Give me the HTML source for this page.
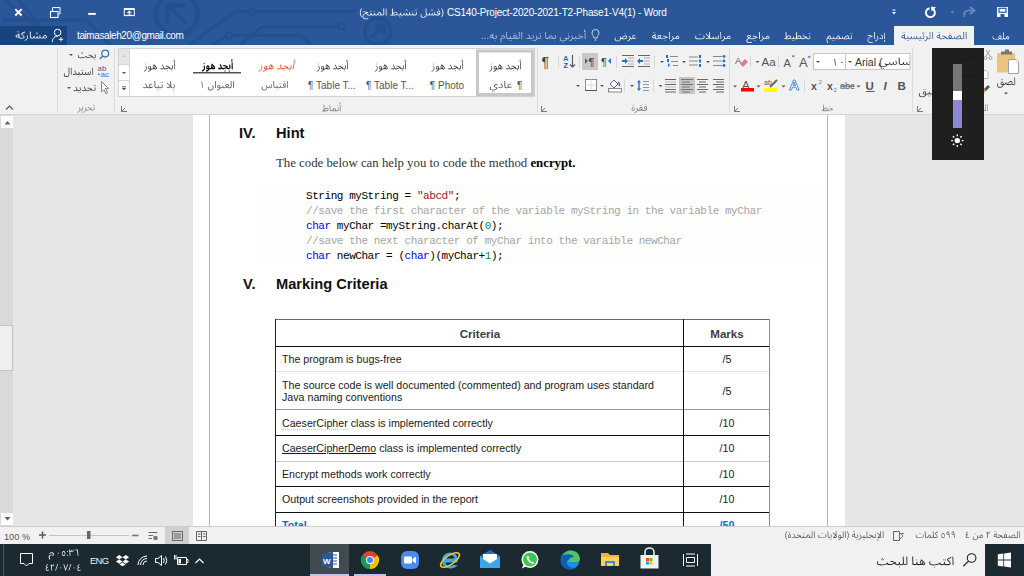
<!DOCTYPE html>
<html><head><meta charset="utf-8">
<style>
*{margin:0;padding:0;box-sizing:border-box}
html,body{width:1024px;height:576px;overflow:hidden;background:#e6e6e6;font-family:"Liberation Sans",sans-serif}
.a{position:absolute}
.t{position:absolute;white-space:pre;line-height:1}
#title{left:0;top:0;width:1024px;height:45px;background:#2b579a;overflow:hidden}
#ribbon{left:0;top:45px;width:1024px;height:70px;background:#f1f1f1;border-bottom:1px solid #d5d5d5}
#doc{left:0;top:115px;width:1024px;height:411px;background:#e6e6e6;overflow:hidden}
#status{left:0;top:526px;width:1024px;height:18px;background:#f1f1f1;border-top:1px solid #cdcdcd}
#task{left:0;top:544px;width:1024px;height:32px;background:#1a2a30}
.wt{color:#fff}
.ar{font-family:"Liberation Sans",sans-serif}
</style></head><body>

<!-- TITLE BAR -->
<div id="title" class="a">
  <svg class="a" style="left:0;top:0" width="460" height="45" fill="none" stroke="#23508f" stroke-width="3">
    <path d="M5 0 L36.3 26"/><path d="M18 0 L40.8 26"/>
    <path d="M2 20 L86 20 L110 45"/>
    <circle cx="176.7" cy="14.5" r="21" stroke-width="5"/>
    <path d="M186 23 L169 6" stroke-width="4.5"/><path d="M165 3 H186 V7.5 H169.5 V23.5 H165Z" fill="#23508f" stroke="none"/>
    <path d="M189 45 L235 11.5 L249 11.5 M255.5 11.5 L356 11.5"/><circle cx="252.3" cy="11.5" r="3.2" stroke-width="2"/>
    <path d="M240 45 L262.5 26.5 L338.3 26.5"/><circle cx="341.5" cy="26.5" r="3.2" stroke-width="2"/>
    <path d="M212 45 L226.3 36.5 M232.5 35.5 L301.6 35.5 L311 45"/><circle cx="229.3" cy="35.5" r="3.2" stroke-width="2"/>
    <circle cx="377.7" cy="31.5" r="13" stroke-width="4"/>
    <path d="M371 38 L382 27" stroke-width="4"/><path d="M375 23.5 H386 V34.5 H382 V27.5 H375Z" fill="#23508f" stroke="none"/>
  </svg>
  <!-- window controls -->
  <svg class="a" style="left:0;top:0" width="140" height="26" fill="none" stroke="#fff">
    <path d="M15.3 9.2 L21.6 15.5 M21.6 9.2 L15.3 15.5" stroke-width="1.9"/>
    <rect x="50.5" y="11.5" width="7.5" height="6" stroke-width="1.1"/>
    <path d="M52.5 11 V7.6 H60 V14 H58.5" stroke-width="1"/>
    <path d="M88.2 13.9 H95.8" stroke-width="1.9"/>
    <rect x="124.3" y="8.6" width="10" height="7" stroke-width="1"/>
    <path d="M124.3 9.2 H134.3" stroke-width="1.6"/>
    <path d="M129.3 15 V11.5" stroke-width="1"/><path d="M127.3 12.8 L129.3 10.8 L131.3 12.8Z" fill="#fff" stroke-width="0.6"/>
    <path d="M126.5 15.2 H132" stroke-width="0.8"/>
  </svg>
  <div class="t wt" style="left:447px;top:8px;font-size:10px;letter-spacing:-0.2px">CS140-Project-2020-2021-T2-Phase1-V4(1) - Word</div>
  <!-- QAT -->
  <svg class="a" style="left:880px;top:0" width="144" height="26">
    <path d="M12.5 10 H15.5" stroke="#fff" stroke-width="1"/>
    <path d="M12 12 H16 L14 14.5Z" fill="#fff"/>
    <path d="M52.6 8.7 A4.5 4.5 0 1 1 49.5 8.2" fill="none" stroke="#fff" stroke-width="1.9"/>
    <path d="M51 6.6 L56 7.2 L51.6 11.6Z" fill="#fff"/>
    <path d="M70.5 11.5 H74.5 L72.5 13.5Z" fill="#6f8fc0"/>
    <path d="M84.5 17 C83 13 85 10.5 89 10.5 H92" fill="none" stroke="#6f8fc0" stroke-width="1.6"/>
    <path d="M90 7 L94.5 10.5 L90 14" fill="none" stroke="#6f8fc0" stroke-width="1.6"/>
    <path d="M117 7 H128 V17 H117Z" fill="#fff"/>
    <rect x="119" y="8.3" width="7" height="4" fill="none" stroke="#2b579a" stroke-width="1.2"/>
    <rect x="120.5" y="14" width="4" height="3" fill="#2b579a"/>
  </svg>
  <!-- tabs row -->
  <div class="a" style="left:0;top:26px;width:67px;height:19px;background:#19437e"></div>
  <svg class="a" style="left:50px;top:27px" width="16" height="17" fill="none" stroke="#fff" stroke-width="1">
    <circle cx="7.6" cy="5.5" r="3.3"/><path d="M2.3 15 C2.5 11 5 9.2 7.8 9.2"/>
    <path d="M8.8 12.3 H13.2 M11 10.1 V14.5" stroke-width="0.9"/>
  </svg>
  <div class="t wt" style="left:77px;top:31.2px;font-size:10px;letter-spacing:-0.4px">taimasaleh20@gmail.com</div>
  <svg class="a" style="left:590px;top:28px" width="12" height="14" fill="none" stroke="#c8d4e8" stroke-width="1">
    <path d="M4 10 C4 8 2 7 2 5 A3.5 3.5 0 0 1 9 5 C9 7 7 8 7 10 Z M4.5 12 H6.5"/>
  </svg>
  <div class="a" style="left:894px;top:26px;width:80px;height:19px;background:#f1f1f1"></div>
</div>

<!-- RIBBON -->
<div id="ribbon" class="a">
</div>
<svg class="a" style="left:0;top:0" width="1024" height="120" font-family="Liberation Sans, sans-serif">
  <!-- group separators -->
  <g fill="#dcdcdc">
    <rect x="57" y="48" width="1" height="64"/><rect x="114" y="48" width="1" height="64"/>
    <rect x="537" y="48" width="1" height="64"/><rect x="729" y="48" width="1" height="64"/>
    <rect x="912" y="48" width="1" height="64"/>
  </g>
  <!-- collapse arrow -->
  <path d="M6 109.5 L9.5 106 L13 109.5" fill="none" stroke="#555" stroke-width="1.2"/>
  <!-- group labels -->
  <g font-size="10" fill="#666" text-anchor="end">
  </g>
  <!-- dialog launchers -->
  <g fill="none" stroke="#777" stroke-width="1">
    <path d="M121.5 106 V111.5 H127 M121.5 111.5 L125 108"/>
    <path d="M541.5 106 V111.5 H547 M541.5 111.5 L545 108"/>
    <path d="M734.5 106 V111.5 H740 M734.5 111.5 L738 108"/>
    <path d="M917.5 106 V111.5 H923 M917.5 111.5 L921 108"/>
  </g>
  <!-- editing group -->
  <g fill="none" stroke="#3a78c3" stroke-width="1.3"><circle cx="105.2" cy="53.6" r="3.4"/><path d="M102.8 56 L99.8 59"/></g>
  <g font-size="10.5" fill="#333" text-anchor="end">
  </g>
  <path d="M69 54 L73 54 L71 56Z M67 87 L71 87 L69 89Z" fill="#555"/>
  <text x="97.5" y="71" font-size="8" fill="#666">a</text><text x="102" y="71" font-size="8" fill="#7d3ab8">b</text>
  <text x="100.5" y="77" font-size="8" fill="#3a78c3">ac</text><rect x="98" y="73.5" width="1.6" height="1.6" fill="#3a78c3"/>
  <path d="M101.5 81.5 V92 L104 89.5 L106 94 L107.5 93 L105.5 88.5 H108.5 Z" fill="#fff" stroke="#777" stroke-width="0.9"/>
  <!-- styles gallery -->
  <rect x="118.5" y="48.5" width="416" height="48" fill="#fff" stroke="#d2d2d2"/>
  <rect x="119" y="49" width="10" height="15" fill="#e6e6e6"/>
  <path d="M129.5 49 V96" stroke="#d8d8d8"/>
  <path d="M119 64.5 H129 M119 80.5 H129" stroke="#d8d8d8"/>
  <path d="M122.5 57 L124 55.5 L125.5 57" fill="none" stroke="#bbb"/>
  <path d="M122 72 H126 L124 74Z" fill="#555"/>
  <path d="M122 86.5 H126 M122 88 H126 L124 90Z" fill="#555" stroke="#555" stroke-width="0.6"/>
  <rect x="477.5" y="51" width="55" height="43.5" fill="#fff" stroke="#c8c8c8" stroke-width="3"/>
  <g font-size="10.5" text-anchor="middle" fill="#333">
  </g>
  <rect x="193" y="72" width="48" height="1.5" fill="#555"/>
  <g font-size="10" text-anchor="middle" fill="#555">
    <text x="517" y="89" text-anchor="start">¶</text>
  </g>
  <g font-size="10" text-anchor="middle" fill="#555">
    <text x="447" y="89">¶ Photo</text>
    <text x="390" y="89">¶ Table T...</text>
    <text x="332" y="89">¶ Table T...</text>
  </g>
  <!-- paragraph group row1 -->
  <text x="541.5" y="67" font-size="14" fill="#444">¶</text>
  <rect x="558" y="56" width="1" height="12" fill="#d8d8d8"/>
  <text x="563" y="61" font-size="7.5" font-weight="bold" fill="#2b6fc1">A</text>
  <text x="563.5" y="68" font-size="7.5" font-weight="bold" fill="#7030a0">Z</text>
  <path d="M572.5 55 V67 M570 64.5 L572.5 67 L575 64.5" fill="none" stroke="#555" stroke-width="1.1"/>
  <rect x="579" y="56" width="1" height="12" fill="#d8d8d8"/>
  <rect x="582" y="53" width="16" height="17" fill="#c8c8c8"/>
  <path d="M585 58 L588 61 L585 64Z" fill="#2b6fc1"/>
  <text x="588.5" y="66" font-size="11" fill="#444">¶</text>
  <text x="601" y="66" font-size="11" fill="#444">¶</text>
  <path d="M611 58 L608 61 L611 64Z" fill="#2b6fc1"/>
  <rect x="616" y="56" width="1" height="12" fill="#d8d8d8"/>
  <g stroke="#666" stroke-width="1">
    <path d="M622 55.5 H634 M622 66.5 H634"/>
    <path d="M628 58 H634 M628 61 H634 M628 64 H634" stroke="#aaa"/>
    <path d="M638 55.5 H650 M638 66.5 H650"/>
    <path d="M644 58 H650 M644 61 H650 M644 64 H650" stroke="#aaa"/>
  </g>
  <path d="M622 60 H625 V58 L628 61 L625 64 V62 H622Z" fill="#2b6fc1"/>
  <path d="M643 60 H640 V58 L637 61 L640 64 V62 H643Z" fill="#2b6fc1"/>
  <rect x="654" y="56" width="1" height="12" fill="#d8d8d8"/>
  <g fill="#555">
    <path d="M660 61 H664 L662 63Z"/><path d="M682 61 H686 L684 63Z"/><path d="M706 61 H710 L708 63Z"/>
  </g>
  <g stroke="#888" stroke-width="1">
    <path d="M670 56.5 H678 M671 61.5 H678 M673 65.5 H678"/>
    <path d="M689 57 H698 M689 61 H698 M689 65 H698"/>
    <path d="M713 56.5 H722 M713 61 H722 M713 65.5 H722"/>
  </g>
  <g fill="#2b6fc1">
    <rect x="666" y="55" width="2" height="3"/><rect x="667" y="59" width="2" height="3"/><rect x="668" y="63.5" width="1.5" height="3"/>
    <rect x="699" y="55" width="2" height="3"/><rect x="699" y="59.5" width="2" height="3"/><rect x="699" y="64" width="2" height="3"/>
    <circle cx="724" cy="56.5" r="1.4"/><circle cx="724" cy="61" r="1.4"/><circle cx="724" cy="65.5" r="1.4"/>
  </g>
  <!-- paragraph row2 -->
  <g fill="#555">
    <path d="M576 85 H580 L578 87Z"/><path d="M600 85 H604 L602 87Z"/><path d="M630 85 H634 L632 87Z"/><path d="M658.5 85 H662.5 L660.5 87Z"/>
  </g>
  <rect x="585.5" y="79.5" width="11" height="11" fill="#fff" stroke="#888"/>
  <path d="M591 79.5 V90.5 M585.5 85 H596.5" stroke="#ddd"/>
  <path d="M585.5 90.5 H596.5" stroke="#555"/>
  <rect x="608.5" y="88.5" width="13" height="3.5" fill="#fff" stroke="#888"/>
  <path d="M610 84 L614 80 L618 84 L614 88Z" fill="#fff" stroke="#666"/>
  <path d="M618 82 Q620.5 84 619 86" fill="none" stroke="#2b6fc1" stroke-width="1.3"/>
  <rect x="624" y="79" width="1" height="13" fill="#d8d8d8"/>
  <path d="M639 80 L641 82.5 H637Z M639 91 L641 88.5 H637Z" fill="#2b6fc1"/>
  <path d="M639 82 V89" stroke="#2b6fc1" stroke-width="1.4"/>
  <path d="M643 81.5 H649 M643 84.5 H649 M643 87.5 H649 M643 90.5 H649" stroke="#999"/>
  <rect x="653" y="79" width="1" height="13" fill="#d8d8d8"/>
  <rect x="679" y="77" width="16" height="17" fill="#c6c6c6"/>
  <g stroke="#666" stroke-width="1">
    <path d="M665 79.5 H676 M665 84.5 H676 M665 89.5 H676 M665 92 H676"/>
    <path d="M665 82 H676 M665 87 H676" stroke="#bbb"/>
    <path d="M681 79.5 H693 M682 82 H690 M681 84.5 H693 M682 87 H690 M681 89.5 H693 M682 92 H690" stroke="#777"/>
    <path d="M697 79.5 H708 M699 82 H706 M697 84.5 H708 M699 87 H706 M697 89.5 H708 M699 92 H706"/>
    <path d="M713 79.5 H724 M716 82 H724 M713 84.5 H724 M716 87 H724 M713 89.5 H724 M716 92 H724"/>
  </g>
  <!-- font group row1 -->
  <text x="735" y="63.5" font-size="9.5" fill="#555">A</text>
  <path d="M740 64 L745 59 L748 62 L743 67Z" fill="#e27b8d"/>
  <rect x="750" y="56" width="1" height="12" fill="#d8d8d8"/>
  <path d="M755.5 61 H759.5 L757.5 63Z" fill="#555"/>
  <text x="761.5" y="66" font-size="11.5" fill="#555">Aa</text>
  <rect x="778" y="56" width="1" height="12" fill="#d8d8d8"/>
  <text x="783.5" y="67" font-size="11" fill="#555">A</text>
  <path d="M791.5 55.5 H795 L793.2 57.5Z" fill="#2b6fc1"/>
  <text x="799" y="67" font-size="13" fill="#555">A</text>
  <path d="M807.5 57.5 H811 L809.2 55.5Z" fill="#2b6fc1"/>
  <rect x="813.5" y="53.5" width="96.5" height="16" fill="#fff" stroke="#c6c6c6"/>
  <path d="M845.5 54 V69" stroke="#c6c6c6"/>
  <path d="M816 61 H820 L818 63Z M848 61 H852 L850 63Z" fill="#555"/>
  <text x="855" y="66" font-size="10.5" fill="#333">Arial (</text>
  <rect x="904" y="54" width="5" height="15" fill="#fff"/>
  <!-- font row2 -->
  <g fill="#555"><path d="M733 85.5 H737 L735 87.5Z"/><path d="M756.5 85.5 H760.5 L758.5 87.5Z"/><path d="M781.5 85.5 H785.5 L783.5 87.5Z"/><path d="M856.5 85.5 H860.5 L858.5 87.5Z"/></g>
  <text x="742" y="88.5" font-size="11.5" fill="#555">A</text>
  <rect x="741" y="88" width="13" height="3.5" fill="#f00"/>
  <text x="764" y="85" font-size="7" fill="#555">ab</text>
  <path d="M770 87 L777 80" stroke="#666" stroke-width="2"/>
  <rect x="764" y="88" width="13" height="4" fill="#ff0"/>
  <path d="M789.5 90 L793.5 80 L795 80 L799 90 H797 L796 87.2 H792.5 L791.5 90Z M793 85.5 H795.5 L794.2 82Z" fill="#fff" stroke="#3d7fd0" stroke-width="0.9" stroke-linejoin="round"/>
  <rect x="804" y="79" width="1" height="13" fill="#d8d8d8"/>
  <text x="811" y="90" font-size="10.5" font-weight="bold" fill="#555">x</text>
  <text x="818.5" y="84" font-size="6" fill="#4a8ad4">2</text>
  <text x="827" y="90" font-size="10.5" font-weight="bold" fill="#555">x</text>
  <text x="833.5" y="92" font-size="6" fill="#4a8ad4">2</text>
  <text x="840" y="89" font-size="9" fill="#555">abe</text>
  <path d="M840 86 H854" stroke="#555" stroke-width="0.8"/>
  <text x="865.5" y="89.5" font-size="11.5" font-weight="bold" fill="#555">U</text>
  <path d="M866 91.5 H874.5" stroke="#555"/>
  <text x="883.5" y="89.5" font-size="11.5" font-weight="bold" font-style="italic" fill="#555">I</text>
  <text x="897.5" y="89.5" font-size="11.5" font-weight="bold" fill="#555">B</text>
  <!-- clipboard group -->
  <g font-size="10" fill="#444" text-anchor="end">
  </g>
  <rect x="997" y="53" width="18" height="19.5" rx="1" fill="#eac47c"/>
  <rect x="1001" y="51.5" width="11" height="3" fill="#777"/>
  <rect x="1005" y="49.5" width="4" height="2.5" fill="#777"/>
  <path d="M1008.5 59.5 H1016 L1018.5 62 V73.5 H1008.5 Z" fill="#fff" stroke="#999" stroke-width="0.9"/>
  <g fill="none" stroke="#999" stroke-width="0.9"><path d="M986 50 L990 56 M990 50 L986 56"/><circle cx="985.5" cy="58" r="1.5"/><circle cx="990.5" cy="58" r="1.5"/></g>
  <path d="M981.5 70.5 H986 L988 72.5 V78.5 H981.5Z" fill="#fff" stroke="#d9a0b0" stroke-width="0.9"/>
  <path d="M980 93 L984 89 L986 91 L982 95Z" fill="#e0a040"/><path d="M984 89 L988 85 L990 87 L986 91Z" fill="#555"/>
  <path d="M1004 92.5 H1008 L1006 94.5Z" fill="#555"/>
</svg>


<!-- DOCUMENT -->
<div id="doc" class="a">
  <!-- scrollbar -->
  <div class="a" style="left:0;top:0;width:13px;height:412px;background:#dadada"></div>
  <div class="a" style="left:1px;top:1px;width:12px;height:12px;background:#fff"></div>
  <svg class="a" style="left:1px;top:1px" width="12" height="12"><path d="M3.5 8.5 L6.5 5 L9.5 8.5Z" fill="#606060"/></svg>
  <div class="a" style="left:0;top:210px;width:13px;height:46px;background:#efefef;border:1px solid #c4c4c4;border-left:none"></div>
  <div class="a" style="left:1px;top:398px;width:12px;height:12px;background:#fff"></div>
  <svg class="a" style="left:1px;top:398px" width="12" height="12"><path d="M3.5 4 L6.5 7.5 L9.5 4Z" fill="#606060"/></svg>
  <!-- page -->
  <div class="a" style="left:193px;top:0;width:652px;height:412px;background:#fff"></div>
  <div class="a" style="left:256px;top:70px;width:571px;height:77px;background:#fefefc"></div>
  <div class="a" style="left:209px;top:0;width:1px;height:412px;background:#b4b4b4"></div>
  <div class="a" style="left:827px;top:0;width:1px;height:412px;background:#b4b4b4"></div>
  <!-- headings -->
  <div class="t" style="left:239px;top:11px;font-size:14.67px;font-weight:bold;color:#111">IV.</div>
  <div class="t" style="left:276px;top:11px;font-size:14.67px;font-weight:bold;color:#111">Hint</div>
  <div class="t" style="left:276px;top:42px;font-family:'Liberation Serif',serif;font-size:12.8px;color:#333">The code below can help you to code the method <b style="color:#000">encrypt.</b></div>
  <div style="position:absolute;left:306px;top:73.5px;font-family:'Liberation Mono',monospace;font-size:11px;letter-spacing:-0.44px;line-height:15.2px;white-space:pre;color:#000">String myString = <span style="color:#a31515">"abcd"</span>;
<span style="color:#a6a6a6">//save the first character of the variable myString in the variable myChar</span>
<span style="color:#0000ff">char</span> myChar =myString.charAt(<span style="color:#098658">0</span>);
<span style="color:#a6a6a6">//save the next character of myChar into the varaible newChar</span>
<span style="color:#0000ff">char</span> newChar = (<span style="color:#0000ff">char</span>)(myChar+<span style="color:#098658">1</span>);</div>
  <div class="t" style="left:243px;top:162px;font-size:14.67px;font-weight:bold;color:#111">V.</div>
  <div class="t" style="left:276px;top:162px;font-size:14.67px;font-weight:bold;color:#111">Marking Criteria</div>
  <!-- table -->
  <div class="a" style="left:275px;top:204px;width:495px;height:1px;background:#6a6a6a"></div>
  <div class="a" style="left:275px;top:231px;width:495px;height:1px;background:#111"></div>
  <div class="a" style="left:275px;top:256px;width:495px;height:1px;background:#e6e6e6"></div>
  <div class="a" style="left:275px;top:294px;width:495px;height:1px;background:#9a9a9a"></div>
  <div class="a" style="left:275px;top:320px;width:495px;height:1px;background:#111"></div>
  <div class="a" style="left:275px;top:346px;width:495px;height:1px;background:#c8c8c8"></div>
  <div class="a" style="left:275px;top:371px;width:495px;height:1px;background:#111"></div>
  <div class="a" style="left:275px;top:397px;width:495px;height:1px;background:#111"></div>
  <div class="a" style="left:275px;top:204px;width:1px;height:208px;background:#222"></div>
  <div class="a" style="left:769px;top:204px;width:1px;height:208px;background:#8a8a8a"></div>
  <div class="a" style="left:683px;top:204px;width:1px;height:208px;background:#111"></div>
  <div class="t" style="left:276px;width:408px;text-align:center;top:212.5px;font-size:11.6px;font-weight:bold;color:#404040">Criteria</div>
  <div class="t" style="left:684px;width:86px;text-align:center;top:212.5px;font-size:11.6px;font-weight:bold;color:#404040">Marks</div>
  <div class="t" style="left:282px;top:239px;font-size:10.67px;color:#1a1a1a">The program is bugs-free</div>
  <div class="t" style="left:282px;top:264px;font-size:10.67px;color:#1a1a1a;line-height:12px">The source code is well documented (commented) and program uses standard
Java naming conventions</div>
  <div class="t" style="left:282px;top:303px;font-size:10.67px;color:#1a1a1a"><span style="border-bottom:1px dotted #ccc">CaeserCipher</span> class is implemented correctly</div>
  <div class="t" style="left:282px;top:328px;font-size:10.67px;color:#1a1a1a"><span style="text-decoration:underline">CaeserCipherDemo</span> class is implemented correctly</div>
  <div class="t" style="left:282px;top:354px;font-size:10.67px;color:#1a1a1a">Encrypt methods work correctly</div>
  <div class="t" style="left:282px;top:379px;font-size:10.67px;color:#1a1a1a">Output screenshots provided in the report</div>
  <div class="t" style="left:282px;top:405px;font-size:10.67px;font-weight:bold;color:#0070c0">Total</div>
  <div class="t" style="left:684px;width:86px;text-align:center;top:239px;font-size:10.67px;color:#1a1a1a">/5</div>
  <div class="t" style="left:684px;width:86px;text-align:center;top:271px;font-size:10.67px;color:#1a1a1a">/5</div>
  <div class="t" style="left:684px;width:86px;text-align:center;top:303px;font-size:10.67px;color:#1a1a1a">/10</div>
  <div class="t" style="left:684px;width:86px;text-align:center;top:328px;font-size:10.67px;color:#1a1a1a">/10</div>
  <div class="t" style="left:684px;width:86px;text-align:center;top:354px;font-size:10.67px;color:#1a1a1a">/10</div>
  <div class="t" style="left:684px;width:86px;text-align:center;top:379px;font-size:10.67px;color:#1a1a1a">/10</div>
  <div class="t" style="left:684px;width:86px;text-align:center;top:405px;font-size:10.67px;font-weight:bold;color:#0070c0">/50</div>
</div>

<!-- STATUS -->
<div id="status" class="a">
</div>
<svg class="a" style="left:0;top:526px" width="1024" height="50" font-family="Liberation Sans, sans-serif">
  <text x="4" y="13.5" font-size="9.2" fill="#555">100 %</text>
  <path d="M39 9 H46 M42.5 5.5 V12.5" stroke="#555" stroke-width="1.4"/>
  <path d="M49 9.5 H129" stroke="#c4c4c4"/>
  <rect x="87" y="5" width="3.5" height="8" fill="#666"/>
  <path d="M132 9.5 H138.5" stroke="#777" stroke-width="1.6"/>
  <g fill="none" stroke="#666" stroke-width="1">
    <path d="M148.5 6.5 H157.5 M148.5 9.5 H153 M148.5 12.5 H152"/>
    <circle cx="155.5" cy="12" r="2.3" fill="#777" stroke="none"/>
  </g>
  <rect x="165" y="1" width="24" height="17" fill="#d0d0d0"/>
  <g stroke="#666" stroke-width="1" fill="none">
    <rect x="172.5" y="5.5" width="10" height="9"/>
    <path d="M174 8 H181 M174 10 H181 M174 12 H181"/>
    <path d="M196.5 5.5 H206.5 V14.5 H196.5Z M201.5 5.5 V14.5 M198 8 H200.5 M198 10.5 H200.5 M203 8 H205.5 M203 10.5 H205.5"/>
  </g>
  <g font-size="9.5" fill="#555" text-anchor="end">
  </g>
  <g stroke="#666" fill="none" stroke-width="1"><path d="M893.5 5.5 H899.5 V14.5 H893.5Z"/><path d="M900 7 L903 10 L900 13 M901 7.5 H904" stroke-width="0.9"/></g>
</svg>

<!-- TASKBAR -->
<div id="task" class="a">
</div>
<svg class="a" style="left:0;top:544px" width="1024" height="32" font-family="Liberation Sans, sans-serif">
  <rect x="3" y="0" width="1" height="32" fill="#4a5458"/>
  <path d="M20.5 9.5 H32.5 V19.5 H29 L26.5 22 L24 19.5 H20.5Z" fill="none" stroke="#fff" stroke-width="1"/>
  <text x="90" y="20" font-size="9.5" fill="#f0f0f0" letter-spacing="-0.75">ENG</text>
  <g fill="#fff">
    <path d="M119.2 11 L122.5 13.2 L119.2 15.4 L115.9 13.2Z M125.8 11 L129.1 13.2 L125.8 15.4 L122.5 13.2Z M119.2 15.4 L122.5 17.6 L119.2 19.8 L115.9 17.6Z M125.8 15.4 L129.1 17.6 L125.8 19.8 L122.5 17.6Z M122.5 18.6 L125.6 20.6 L122.5 22.3 L119.4 20.6Z"/>
  </g>
  <g fill="none" stroke="#fff" stroke-width="1">
    <path d="M138 21 A9 9 0 0 1 147 12 M140.5 21 A6.5 6.5 0 0 1 147 14.5 M143 21 A4 4 0 0 1 147 17" />
    <path d="M155.5 14.5 H158 L161.5 11.5 V21.5 L158 18.5 H155.5Z M163.5 14 Q165 16.5 163.5 19 M165.5 12.5 Q168 16.5 165.5 20.5"/>
    <path d="M177.5 13.5 H186.5 V20.5 H177.5Z M186.5 15.5 H188 V18.5 H186.5"/>
    <path d="M174.5 11 V15.5 M176 11 V15.5"/>
    <path d="M195.5 19 L199.5 15 L203.5 19" stroke-width="1.2"/>
  </g>
  <rect x="178.5" y="15" width="2.5" height="4.5" fill="#fff"/>
  <!-- word active -->
  <rect x="310" y="0" width="39" height="32" fill="#3f4b4f"/>
  <rect x="310" y="30" width="39" height="2" fill="#c8bff5"/>
  <rect x="354" y="30" width="32" height="2" fill="#c8bff5"/>
  <rect x="329" y="8" width="10" height="16" fill="#fff"/>
  <path d="M331 11 H337 M331 14 H337 M331 17 H337 M331 20 H337" stroke="#2b579a" stroke-width="1"/>
  <path d="M322 10 L333 7.5 V24.5 L322 22Z" fill="#2b579a"/>
  <text x="323" y="20" font-size="8" font-weight="bold" fill="#fff">W</text>
  <!-- chrome -->
  <circle cx="370" cy="16" r="9" fill="#db4437"/>
  <path d="M370 16 L377.8 11.5 A9 9 0 0 1 370 25 Z" fill="#f4c20d"/>
  <path d="M370 16 L370 25 A9 9 0 0 1 362.2 11.5 Z" fill="#0f9d58"/>
  <circle cx="370" cy="16" r="4" fill="#fff"/><circle cx="370" cy="16" r="3" fill="#4285f4"/>
  <!-- zoom -->
  <rect x="401" y="7" width="18" height="18" rx="6" fill="#4a8cf0"/>
  <rect x="404" y="12.5" width="8" height="7" rx="1.2" fill="#fff"/>
  <path d="M412.5 15 L416 12.5 V19.5 L412.5 17Z" fill="#fff"/>
  <!-- IE -->
  <path d="M443 16.5 H457.5 Q458 9 450.5 8.5 Q443 8.5 442 16 Q441.5 24 450 24.5 Q455 24.5 457.5 21 H453 Q451.5 22 450 22 Q446 22 445.5 18.5 H457.5 V16.5 Z M445.5 14.5 Q446.5 11 450.3 11 Q454 11 454.5 14.5Z" fill="#3ba9ec" fill-rule="evenodd"/>
  <ellipse cx="450" cy="16" rx="11" ry="4.5" transform="rotate(-35 450 16)" fill="none" stroke="#f2c230" stroke-width="1.6"/>
  <path d="M443 16.5 H457.5 Q458 9 450.5 8.5 Q443 8.5 442 16" fill="none" stroke="#3ba9ec" stroke-width="0"/>
  <!-- mail -->
  <path d="M480 12 L490 6 L500 12 V24 H480Z" fill="#1b74c4"/>
  <path d="M480 12 L490 19 L500 12 V24 H480Z" fill="#3ba5ee"/>
  <path d="M483 10 H497 V15 L490 19.5 L483 15Z" fill="#fff"/>
  <!-- whatsapp -->
  <circle cx="530" cy="15.5" r="8.5" fill="#fff"/>
  <circle cx="530" cy="15.5" r="7" fill="#3ec552"/>
  <path d="M522 24.5 L523.5 20 L526 22.5Z" fill="#fff"/>
  <path d="M527 11.5 Q526 15 529 18 Q532 20.5 534 19.5 L533 17.5 L531.5 18 Q529 16.5 528.5 14 L529.5 13 Z" fill="#fff"/>
  <!-- edge -->
  <circle cx="570" cy="16" r="9.5" fill="#1d8fd6"/>
  <path d="M561 15 Q563 6 571 6.5 Q579.5 7 580 16 L570 16 Q566 16 566.5 19 Q568 24 575 24 Q569 27 564 23.5 Q560.5 20 561 15Z" fill="#0c5fb3"/>
  <path d="M571 6.5 Q579.5 7 580 15 Q580 18 575 18 H568 Q569 13 574 13 Q572 9 563 11 Q566 6.5 571 6.5Z" fill="#52c36b"/>
  <!-- explorer -->
  <path d="M601 9 H608 L610 11 H619 V22 H601Z" fill="#f0b733"/>
  <rect x="601" y="13" width="18" height="9" fill="#fcd25c"/>
  <path d="M605 22 V17 H615 V22 H613 V19 H607 V22Z" fill="#3e8ad6"/>
  <!-- store -->
  <path d="M640.5 11 H658.5 V24.5 H640.5Z" fill="#f2f2f2"/>
  <path d="M645 11 V8 A4.5 4 0 0 1 654 8 V11" fill="none" stroke="#f2f2f2" stroke-width="1.5"/>
  <rect x="646" y="14" width="3" height="3" fill="#f25022"/><rect x="649.5" y="14" width="3" height="3" fill="#7fba00"/>
  <rect x="646" y="17.5" width="3" height="3" fill="#00a4ef"/><rect x="649.5" y="17.5" width="3" height="3" fill="#ffb900"/>
  <!-- task view -->
  <g fill="none" stroke="#fff" stroke-width="1">
    <path d="M683.5 10 V22 M697.5 10 V22 M686 10 H695 M686 22 H695 M686.5 13.5 H694.5 V18.5 H686.5Z"/>
  </g>
  <!-- search -->
  <rect x="711" y="0" width="274" height="32" fill="#f2f2f2"/>
  <circle cx="971.6" cy="14" r="4.3" fill="none" stroke="#222" stroke-width="1.1"/>
  <path d="M968.5 17.1 L963.3 22.2" stroke="#222" stroke-width="1.2"/>
  <!-- start -->
  <g fill="#fff"><path d="M997.8 10.2 L1003.3 9.5 V15.6 H997.8Z M1004.1 9.4 L1011 8.5 V15.6 H1004.1Z M997.8 16.4 H1003.3 V22.5 L997.8 21.8Z M1004.1 16.4 H1011 V23.5 L1004.1 22.6Z"/></g>
</svg>

<svg class="a" style="left:0;top:0" width="1024" height="576">
<defs><clipPath id="cpa"><rect x="846" y="54" width="63.5" height="15"/></clipPath></defs>
<path transform="translate(359.37 15.50) scale(1.021 1)" d="M40.8 0.9 40.3 1.6 40.9 1.9 41.2 1.3ZM39.4 0.9 38.9 1.6 39.6 1.9 39.9 1.3ZM6.3 0.2 6 0.8 6.6 1.1 6.9 0.5ZM51.8 -4.8 51.7 -4.1 52.3 -3.9 52.5 -4.6ZM14.4 -4.8 14.3 -4.1 14.9 -3.9 15.1 -4.6ZM11.9 -4.8 11.6 -4.2 12.3 -3.9 12.6 -4.5ZM10.4 -4.8 10.3 -4.1 10.9 -3.9 11.1 -4.6ZM71.6 -5.3 71.4 -4.8 72.1 -4.4 72.3 -5ZM70.2 -5.2 70.1 -4.6 70.7 -4.4 70.9 -5.1ZM46.8 -5.3 46.6 -4.8 47.2 -4.4 47.5 -5ZM45.4 -5.2 45.2 -4.6 45.9 -4.4 46.1 -5.1ZM55.9 -6.1 55.6 -5.5 56.3 -5.2 56.6 -5.8ZM54.4 -6 54.3 -5.4 54.9 -5.2 55.1 -5.9ZM71 -6.4 70.7 -5.9 71.1 -5.5 71.4 -5.6 71.6 -6.1ZM46.2 -6.4 45.9 -5.9 46.2 -5.5 46.6 -5.6 46.8 -6.1ZM77.2 -6.9 77.1 -6.3 77.8 -6.1 77.9 -6.8ZM80.1 -7.1 81 -5.6 81.5 -3.6 81.3 -0.9 80.1 1.5 80.9 1.5 82.1 -0.8 82.3 -3.8 81.3 -6.6 80.9 -7.1ZM59.9 0.4 60.2 1.2 60.9 1.9 63.1 2.2 64.7 1.7 65.4 0.9 65.9 -0.4 67.2 0 68.1 -0.2 68.4 -0.7 68.9 -0.1 70.1 0 71.1 -0.6 71.6 -0.1 72.6 0 73.5 -0.3 73.9 -0.9 74.8 -0.1 77.4 -0.1 78.2 -0.4 79 -1.1 79.3 -3.2 78.8 -4.5 78.2 -4.9 77.5 -5 76.5 -4.2 76.1 -2.6 77 -1.7 78.4 -1.6 77.6 -0.9 74.7 -0.9 74.2 -1.8 74 -3.4 73.4 -3.4 73.4 -1.3 72.9 -0.8 71.6 -1 71.7 -2.7 71.2 -2.8 70.7 -1.2 70.2 -0.8 69.5 -0.8 68.9 -1.1 69.1 -2.6 68.4 -2.8 67.9 -1.1 67.5 -0.8 66.5 -0.8 65.8 -1.7 65.6 -7.1 64.9 -7.1 65.1 -0.3 64.8 0.4 63.4 1.4 61.7 1.4 60.7 0.4 60.9 -1.5 60.3 -1.8ZM77.4 -4.2 77.9 -4.2 78.3 -3.9 78.6 -2.9 78.5 -2.4 77.4 -2.4 76.9 -2.8 76.9 -3.6ZM30.2 -0.1 34.5 0.1 36.4 -0.4 38.8 0 40.2 -0.6 40.8 -0.1 42.4 0 43.2 -0.2 43.6 -0.7 44.6 0 45.6 -0.1 46.3 -0.6 46.8 -0.1 47.8 0 48.7 -0.3 49.1 -0.9 49.5 -0.3 50.3 0 51.8 -0.2 52.2 -0.7 52.9 -0.1 54.4 0 55.4 -0.2 56.1 -0.7 56.3 -2.3 55.7 -4 55.1 -3.8 55.6 -2 55.4 -0.9 52.9 -0.9 52.6 -1.3 52.8 -2.7 52.1 -2.8 51.7 -1.1 50.4 -0.8 49.5 -1.4 49.2 -3.4 48.6 -3.4 48.6 -1.3 48.1 -0.8 46.8 -1 46.9 -2.7 46.2 -2.8 45.9 -1.2 45.4 -0.8 44.7 -0.8 44.1 -1.1 44.2 -2.6 43.6 -2.8 43.1 -1.1 42.7 -0.8 41.7 -0.8 40.6 -1.1 40.8 -2.7 40.1 -2.8 39.8 -1.4 39.3 -0.9 37.5 -0.8 37.1 -1 37.3 -2.6 36.4 -3.6 34.6 -3.6 32.9 -2.4 32.7 -7.1 31.9 -7.1 32.1 -1.4 31.6 -0.8 30.3 -0.8ZM36.6 -2.3 36.6 -1.6 35.8 -0.9 32.5 -0.8 33.6 -2 34.9 -2.9 36 -2.9ZM25.8 -7.1 25.9 -0.1 26.7 -0.1 26.5 -7.1ZM24.2 -7.1 23.4 -7.1 23.6 -1.4 23.3 -0.9 22.8 -0.8 21.9 -0.9 20.7 -3.1 19.9 -3.6 18.9 -3.4 17 -0.8 15.6 -0.9 15.3 -1.3 15.5 -2.7 15 -2.8 14.2 -0.9 12.1 -0.9 11.8 -1.3 12 -2.7 11.2 -2.8 10.9 -1.2 10.3 -0.8 9.2 -0.8 8.3 -1 7.6 -2 7.6 -2.4 8.7 -2.6 8.6 -3.3 7.2 -3.4 5.2 -4.1 3.4 -4 3.4 -3.2 5.1 -3.4 6.6 -2.9 4.9 -2 3.7 -0.8 3.1 0.6 3.2 2.2 4.1 3.2 5.6 3.8 7.6 3.8 8.9 3.3 8.7 2.8 7 3.1 5.5 3 4.6 2.6 3.9 1.8 3.9 0.6 4.3 -0.4 5.4 -1.5 6.9 -2.2 7.4 -0.8 8.5 -0.1 10.5 -0.1 11.4 -0.6 11.9 -0.1 13.7 0 14.4 -0.2 14.9 -0.7 15.6 -0.1 16.9 0 17.6 -0.2 18.1 -1 19.8 0.1 20.5 0.1 21.1 -0.5 22.1 0 23.6 -0.2 24.2 -0.7 24.4 -1.4ZM19.4 -2.9 20.1 -2.6 20.7 -1.1 20.2 -0.6 19.4 -0.8 18.5 -1.8ZM1.8 -7.1 0.7 -5 0.4 -1.8 0.8 -0.4 1.8 1.5 2.6 1.5 1.9 0.3 1.2 -1.9 1.4 -4.7 2.6 -7.1Z" fill="#fff"/>
<path transform="translate(15.25 38.60) scale(1.118 1)" d="M10.8 -3.4 10.2 -3.1 10.8 -1.5 10.7 -0.3 9.8 0.8 8.3 1.5 8.6 2.2 10.1 1.5 11.3 0 11.5 -1.6ZM19.9 -5.3 19.6 -4.8 20.3 -4.4 20.6 -5ZM18.4 -5.2 18.3 -4.6 18.9 -4.4 19.1 -5.1ZM19.2 -6.4 18.9 -5.9 19.3 -5.5 19.7 -5.6 19.9 -6.1ZM8.8 -7 6.1 -5.8 5.2 -4.8 5.2 -4.3 7.5 -2.1 7.6 -1.3 7.2 -0.9 4.7 -0.8 3.9 -1.2 3.6 -5.2 2.8 -5.2 2.8 -4.4 1.3 -3.9 0.6 -3.2 0.3 -2.6 0.5 -1.6 1.4 -1 3.1 -1 3.6 -0.3 4.5 0 6.3 0 7.8 -0.4 8.3 -1.2 8.1 -2.4 5.9 -4.7 8.9 -6.3ZM2.8 -3.6 2.9 -1.8 1.4 -1.9 1 -2.4 1.2 -2.9ZM13 -7.1 13.2 -1.2 13.4 -0.6 14 -0.1 15.9 -0.1 16.8 -0.7 17.8 0 18.8 -0.1 19.4 -0.6 19.9 -0.1 20.9 0 21.8 -0.3 22.2 -0.9 22.6 -0.3 23.4 0 24.3 -0.1 25.1 -0.7 26 -0.2 27.2 -0.1 28.2 -0.9 28.2 -2.1 27.9 -2.8 27.2 -3.5 26.4 -3.6 25.4 -2.9 24.6 -1.2 23.9 -0.8 23.2 -0.8 22.6 -1.4 22.3 -3.4 21.6 -3.4 21.8 -1.3 21.2 -0.8 19.9 -1 20 -2.7 19.5 -2.8 19 -1.2 18.6 -0.8 17.8 -0.8 17.2 -1.1 17.4 -2.6 16.8 -2.8 15.9 -0.9 14.5 -0.8 13.9 -1.6 13.8 -7.1ZM26.4 -2.8 26.9 -2.8 27.5 -2.1 27.6 -1.4 27.2 -0.9 26.2 -0.9 25.4 -1.3ZM2.9 -7.2 2.6 -6.7 3.3 -6.4 3.6 -6.9ZM1.4 -7.2 1.3 -6.6 1.9 -6.4 2.1 -7.1Z" fill="#fff"/>
<path transform="translate(480.80 39.00) scale(1.065 1)" d="M77.6 3.2 77.2 3.8 77.8 4.1 78.1 3.6ZM76.2 3.2 75.8 3.8 76.4 4.1 76.8 3.6ZM49.3 0.9 48.9 1.6 49.5 1.9 49.8 1.3ZM47.9 0.9 47.5 1.6 48.1 1.9 48.4 1.3ZM28.4 0.9 27.9 1.6 28.6 1.9 28.9 1.3ZM27 0.9 26.6 1.6 27.2 1.9 27.5 1.3ZM89 0.9 88.6 1.4 89.2 1.8 89.6 1.2ZM69.4 0.9 69 1.4 69.6 1.8 69.9 1.2ZM13.8 0.9 13.4 1.4 14.1 1.8 14.4 1.2ZM6.4 -1.2 6.1 -0.9 6.1 -0.2 6.9 0.1 7.2 -0.2 7.2 -0.9ZM3.8 -1.2 3.4 -0.9 3.4 -0.2 4.2 0.1 4.6 -0.2 4.6 -0.9ZM1.1 -1.2 0.8 -0.9 0.8 -0.2 1.5 0.1 1.9 -0.2 1.9 -0.9ZM96.2 -2.3 95.4 -2.4 93.4 -3.4 91.5 -3.4 91.6 -2.7 93.9 -2.5 94.7 -2 94.2 -1.6 92.2 -0.9 90.1 -0.8 89.5 -1.3 89.7 -2.7 89 -2.8 88.6 -1.1 87.4 -0.8 86.7 -1.1 85.7 -3.4 85.1 -3.1 85.8 -1.5 85.6 -0.3 84.8 0.8 83.2 1.6 83.5 2.2 84.7 1.8 85.7 0.9 86.4 -0.4 87.9 0 88.6 -0.2 89.1 -0.7 89.5 -0.2 90.4 0 92.8 -0.2 95.2 -1.4 96.3 -1.6ZM21.4 -3.8 19.9 -3.6 18.9 -2.5 19.4 -2.1 20.2 -2.9 21 -3.1 21.9 -1.9 21.8 -1.2 19.8 -1.3 18.6 -0.5 18.4 1 18.9 3.9 19.6 3.7 19.1 0.9 19.4 -0.2 20.1 -0.6 22.2 -0.4 22.5 -1 22.4 -2.7ZM82.8 -4 82 -3.8 82.6 -1.9 82.5 -1.2 82.2 -0.9 81 -0.8 78.7 -1.4 78.5 -0.7 80 0 80 0.4 79.4 1 77.9 1.5 76.2 1.4 75.4 1.1 74.8 0.2 75.1 -1.5 74.4 -1.8 74.1 -0.5 74.4 1.2 75.1 1.8 76.4 2.2 78.5 2.1 80 1.5 80.5 1 80.8 0 82.2 -0.1 83 -0.7 83.2 -2.2ZM56 -4 55.2 -3.8 55.8 -2 55.8 -1.2 55.3 -0.8 53.6 -0.9 52.5 -3.3 51.8 -3.1 52.4 -1.5 52.4 -0.5 51.4 0.8 49.9 1.6 50.2 2.2 52.1 1.2 53.1 -0.4 54.6 0 55.6 -0.2 56.2 -0.7 56.5 -2.3ZM42.6 -0.5 43.9 0 45.4 -0.1 46.1 -0.8 47.2 0 49.2 -0.4 49.8 -1.3 49.4 -3.9 48.6 -3.8 49.1 -2 49 -1.1 47.4 -0.8 46.8 -1.2 45 -4.7 44.4 -4.2 45.6 -2.2 45.6 -1.2 44.6 -0.8 42.9 -1.1ZM8.4 -2.8 8.4 -1.9 8.8 -1.4 9.8 -0.9 11.1 -1 12.2 -0.1 14.1 -0.2 14.8 -0.7 15 -1.4 14.9 -2.9 14.4 -4 13.8 -3.8 14.3 -1.9 14.2 -1.2 13.3 -0.8 12.4 -0.8 11.9 -1.2 11.6 -5.2 10.9 -5.2 10.8 -4.4 9.4 -3.9ZM10.9 -3.6 11 -1.8 9.4 -1.9 9.1 -2.4 9.3 -2.9ZM92.2 -5.4 92.1 -4.8 92.8 -4.6 92.9 -5.3ZM82.1 -6 81.9 -5.4 82.6 -5.2 82.8 -5.9ZM56.1 -6.1 55.9 -5.5 56.6 -5.2 56.8 -5.8ZM54.7 -6 54.6 -5.4 55.2 -5.2 55.4 -5.9ZM32.6 -6.1 32.3 -5.6 33 -5.2 33.2 -5.8ZM31.1 -6.1 31 -5.4 31.6 -5.2 31.8 -5.9ZM97.5 -6.4 97.6 -0.1 98.4 -0.1 98.2 -6.4ZM60.5 -7.1 60.7 -1.2 61.2 -0.2 63.2 -0.1 64.2 -1 65.1 -0.2 66.4 0.1 67.2 -0.5 67.9 -0.1 69.7 -0.2 70.3 -0.7 70.6 -2.2 70.1 -4 69.3 -3.8 69.9 -1.9 69.8 -1.2 69.5 -0.9 68 -0.9 66.8 -3.1 65.9 -3.6 64.9 -3.4 63.2 -0.9 61.8 -0.9 61.4 -1.6 61.2 -7.1ZM65.5 -2.9 66.2 -2.6 66.8 -1.1 66.3 -0.6 65.4 -0.8 64.6 -1.8ZM38 -7.1 38.2 -0.1 38.9 -0.1 38.8 -7.1ZM23.8 -7.1 23.9 -1.2 24.5 -0.2 26.4 0 27.8 -0.6 28.1 -0.2 29.1 0 32.1 -0.3 35 0 35.8 -0.2 36.4 -0.7 36.4 -7.1 35.6 -7.1 35.8 -1.4 35.5 -0.9 35 -0.8 33.2 -0.9 33.8 -1.8 33.8 -2.8 33.4 -3.6 32.6 -4.1 31.5 -4 30.7 -3.2 30.5 -1.9 31.1 -0.8 28.4 -0.9 28.2 -1.3 28.4 -2.7 27.9 -2.8 26.9 -0.9 25 -0.9 24.7 -1.6 24.5 -7.1ZM32.4 -3.4 32.9 -2.9 33.1 -2.1 32.1 -1.1 31.4 -1.6 31.2 -2.5 31.8 -3.2ZM98.3 -9.3 97.6 -9.4 97 -9 96.9 -8.4 97.3 -7.8 96.9 -7.6 97 -7.1 98.8 -7.6 98.6 -8.1 97.9 -7.9 97.4 -8.4 97.6 -8.9 98.2 -8.9Z" fill="#b9c8e0"/>
<path transform="translate(614.38 39.20) scale(1.022 1)" d="M12.5 -2.6 11.6 -3.6 10.2 -3.7 8.4 -2.7 6.9 -0.9 6.2 -1.5 5.9 -2.8 5.2 -2.7 5.5 -1.1 5.4 0.4 4.6 1.2 3.6 1.5 2.2 1.4 1.2 0.7 1.1 -0.5 1.4 -1.5 0.7 -1.8 0.3 -0.5 0.4 0.6 1.1 1.6 2 2.1 4.4 2.1 5.6 1.4 6.4 -0.4 7.6 0 9.7 0.1 11.7 -0.5 12.4 -1.4ZM11.8 -2.3 11.8 -1.6 10.9 -0.9 9.8 -0.7 7.7 -0.8 8.8 -2.1 10.1 -2.9 11.2 -2.9ZM20.5 -4.2 18.9 -4.3 17.8 -3.6 17.6 -2.1 18.4 -0.8 16.1 -0.9 15.1 -3.3 14.4 -3.1 15 -1.5 14.9 -0.5 14 0.8 12.5 1.6 12.8 2.2 14.6 1.2 15.6 -0.4 16.4 0 18.2 -0.1 21.4 -0.9 21.2 -1.6 19.6 -1.1 18.7 -1.6 18.3 -2.2 18.3 -2.8 18.7 -3.4 20.4 -3.6ZM10.2 -5.7 10.1 -5.1 10.8 -4.9 10.9 -5.6Z" fill="#fff"/>
<path transform="translate(651.68 39.20) scale(1.039 1)" d="M12.8 0.9 12.4 1.4 13 1.8 13.3 1.2ZM26.3 -2.8 25.6 -3.5 24.6 -3.5 23.8 -2.9 22.9 -1.2 21.9 -0.8 21.2 -1.1 20.4 -3.3 19.8 -3.1 20.3 -1.5 20.2 -0.5 19.3 0.8 17.8 1.6 18.1 2.2 19.9 1.2 20.9 -0.4 22.3 0 23.4 -0.7 24.6 -0.1 25.9 -0.2 26.6 -1.1ZM24.8 -2.8 25.3 -2.8 25.9 -2.1 26 -1.4 25.6 -0.9 24.6 -0.9 23.8 -1.3ZM0.3 -2.6 0.3 -1.9 0.9 -1.2 1.8 -0.9 3.1 -1 3.6 -0.3 4.5 0 6.1 -0.1 7.4 -0.6 9.1 -0.1 11.1 -0.1 15.5 -1.6 15.4 -2.3 14.6 -2.4 12.6 -3.4 10.7 -3.4 10.8 -2.7 12.6 -2.7 13.5 -2.3 13.8 -1.9 11.1 -0.8 8.4 -1 9.2 -2.4 9.2 -3.4 8.5 -4 7.4 -4.1 6 -3.6 5.4 -3.1 5.6 -2.4 6.8 -1.1 4.4 -0.8 3.8 -1.5 3.6 -5.2 2.8 -5.2 2.8 -4.4 1.3 -3.9ZM6.1 -2.9 7.8 -3.4 8.4 -3 8.5 -2.5 7.6 -1.5ZM2.8 -3.6 2.9 -1.8 1.4 -1.9 1 -2.4 1.2 -2.9ZM16.7 -7.1 16.9 -0.1 17.6 -0.1 17.4 -7.1ZM2.9 -7.2 2.6 -6.7 3.3 -6.4 3.6 -6.9ZM1.4 -7.2 1.3 -6.6 1.9 -6.4 2.1 -7.1Z" fill="#fff"/>
<path transform="translate(694.88 39.20) scale(1.038 1)" d="M34.1 -2.8 33.4 -3.5 32.4 -3.5 31.6 -2.9 30.8 -1.2 29.8 -0.8 29.1 -1.1 28.2 -3.3 27.6 -3.1 28.1 -1.5 28.1 -0.5 27.1 0.8 25.6 1.6 25.9 2.2 27.8 1.2 28.8 -0.4 30.1 0 31.2 -0.7 32.4 -0.1 33.8 -0.2 34.4 -1.1ZM32.6 -2.8 33.1 -2.8 33.7 -2.1 33.8 -1.4 33.4 -0.9 32.4 -0.9 31.6 -1.3ZM9.4 -2.3 8.8 -4 8.1 -3.8 8.6 -2.2 8.6 -1.6 8.1 -1.1 6.6 -0.7 3 -0.6 1.8 -0.9 1.2 -1.3 1.2 -3.2 0.6 -3.4 0.3 -1.4 0.9 -0.5 2 0 6.4 0.1 8.8 -0.6 9.2 -1.2ZM5.3 -5 5.1 -4.4 5.8 -4.1 6 -4.7ZM3.9 -4.9 3.8 -4.3 4.4 -4.1 4.6 -4.8ZM24.5 -7.1 24.7 -0.1 25.4 -0.1 25.2 -7.1ZM10.4 -5.1 13.4 -1.6 12.2 -0.9 10.6 -0.9 10.6 -0.1 12.8 -0.2 13.9 -1.2 14.2 -0.5 15.1 -0.1 16.7 -0.1 17.5 -0.7 18.5 0 19.5 -0.1 20.2 -0.6 20.7 -0.1 21.8 0 22.6 -0.3 23.2 -1.2 23.1 -2.7 22.6 -4 21.9 -3.8 22.5 -2.1 22.5 -1.3 22 -0.8 20.7 -1 20.8 -2.7 20.2 -2.8 19.8 -1.2 19.3 -0.8 18 -1 18.1 -2.6 17.5 -2.8 16.7 -0.9 15.1 -0.9 14.8 -1.4 14.5 -7.1 13.8 -7.1 13.8 -2.4 10.9 -5.6Z" fill="#fff"/>
<path transform="translate(746.27 39.20) scale(1.059 1)" d="M7.9 0.9 7.6 1.4 8.2 1.8 8.5 1.2ZM21.6 -2.8 20.8 -3.5 19.8 -3.5 19.1 -2.9 18.2 -1.2 17.2 -0.8 16.5 -1.1 15.6 -3.3 15 -3.1 15.6 -1.5 15.5 -0.5 14.6 0.8 13.1 1.6 13.3 2.2 15.2 1.2 16.2 -0.4 17.6 0 18.7 -0.7 19.9 -0.1 21.2 -0.2 21.9 -1.1ZM20.1 -2.8 20.6 -2.8 21.1 -2.1 21.2 -1.4 20.9 -0.9 19.9 -0.9 19 -1.3ZM0.2 2.5 0.9 3.4 1.9 3.8 3.4 3.9 5.4 3.2 5.2 2.6 3.4 3.1 1.4 2.7 0.9 2 0.9 1.2 1.4 0.3 2.6 -0.7 4.8 0 7.2 -0.2 9.7 -1.4 10.8 -1.6 10.7 -2.3 9.8 -2.4 7.8 -3.4 6.1 -3.4 6.1 -2.7 7.8 -2.7 9.1 -1.9 6.7 -0.9 4.4 -0.8 3.3 -1.2 4.3 -2.4 4.2 -3.5 3.2 -4.1 1.9 -3.9 0.7 -3.1 0.8 -2.4 2.1 -1.2 0.4 0.4 0.1 1.2ZM1.3 -2.9 3 -3.4 3.6 -2.9 3.6 -2.5 2.7 -1.6ZM11.9 -7.1 12.1 -0.1 12.9 -0.1 12.7 -7.1Z" fill="#fff"/>
<path transform="translate(783.82 39.20) scale(0.954 1)" d="M10.8 0.9 10.3 1.6 10.9 1.9 11.2 1.3ZM9.4 0.9 8.9 1.6 9.6 1.9 9.9 1.3ZM20.4 -5.4 20.2 -4.8 20.9 -4.6 21.1 -5.3ZM27.4 -6.1 27.2 -5.5 27.9 -5.2 28.1 -5.8ZM26 -6 25.9 -5.4 26.5 -5.2 26.7 -5.9ZM0.2 -0.1 4.5 0.1 6.4 -0.4 8.8 0 10.2 -0.6 10.5 -0.2 11.4 0 15.4 -0.1 17.1 -0.5 19.6 0 21.4 -0.4 23.3 -1.3 24.1 -0.2 25.9 0 26.9 -0.2 27.6 -0.7 27.8 -2.3 27.2 -4 26.6 -3.8 27.1 -2 27.1 -1.2 26.6 -0.8 24.4 -0.9 24 -1.5 24.6 -1.6 24.5 -2.3 23.6 -2.4 21.3 -3.5 19.8 -3.4 19.9 -2.7 21.6 -2.7 22.9 -1.9 20.5 -0.9 18 -0.9 18.3 -1.8 18.2 -2.6 17.7 -3.4 16.9 -3.7 15.7 -3.6 13.8 -2.2 13.6 -7.1 12.8 -7.1 12.8 -1 12.6 -0.8 10.8 -0.9 10.6 -1.3 10.8 -2.7 10.1 -2.8 9.8 -1.4 9.3 -0.9 7.5 -0.8 7.1 -1 7.3 -2.6 6.4 -3.6 4.6 -3.6 2.9 -2.4 2.7 -7.1 1.9 -7.1 2.1 -1.4 1.6 -0.8 0.3 -0.8ZM17.6 -2.3 17.6 -1.7 16.8 -1.1 13.6 -0.8 14.4 -1.9 15.8 -2.8 17 -2.9ZM6.6 -2.3 6.6 -1.6 5.8 -0.9 2.5 -0.8 3.6 -2 4.9 -2.9 6 -2.9Z" fill="#fff"/>
<path transform="translate(826.48 39.20) scale(0.953 1)" d="M8.1 0.9 7.6 1.6 8.2 1.9 8.6 1.3ZM6.7 0.9 6.2 1.6 6.9 1.9 7.2 1.3ZM26.7 -3.4 26.4 -4 25.7 -3.8 26.2 -2 26.2 -1.2 25.8 -0.8 23.4 -0.9 23.6 -2.4 23.4 -3 22.7 -3.6 21.5 -3.7 19.8 -2.9 17.9 -0.8 17.2 -1.2 17.3 -2.6 16.8 -2.8 16 -1 15.4 -0.8 14.7 -0.9 13.4 -3.1 12.6 -3.6 11.6 -3.4 9.8 -0.8 8.1 -0.9 7.9 -1.3 8.1 -2.7 7.4 -2.8 7 -1.2 6.6 -0.9 5.6 -0.8 4.9 -1.2 3.9 -3.4 2.9 -3.6 1.7 -2.9 0.2 -0.9 0.1 0.9 0.7 3.7 1.5 3.7 0.9 0.8 0.9 -0.3 1.3 -1.4 2.1 -0.4 3.2 0.1 3.9 0.1 4.6 -0.4 5.4 0 6.6 -0.1 7.5 -0.6 8.1 -0.1 9.6 0 10.3 -0.2 10.9 -1 12.5 0.1 13.2 0.1 13.9 -0.5 14.6 -0.1 15.8 -0.1 16.8 -0.8 17.3 -0.2 19 0.1 21.2 0.1 22.7 -0.4 25.1 0 26.4 -0.4 26.9 -1.1ZM1.8 -2 2.6 -2.6 3.3 -2.8 3.9 -1.8 4 -0.8 3.4 -0.6 2.7 -0.9ZM12.2 -2.9 12.9 -2.6 13.4 -1.1 13 -0.6 12.1 -0.8 11.2 -1.8ZM22.9 -2.3 22.8 -1.4 22 -0.9 20.6 -0.6 18.8 -0.8 20.2 -2.2 21.1 -2.8 22.3 -2.9ZM26.6 -6.1 26.3 -5.5 27 -5.2 27.2 -5.8ZM25.1 -6 25 -5.4 25.6 -5.2 25.8 -5.9Z" fill="#fff"/>
<path transform="translate(867.38 39.20) scale(0.951 1)" d="M18.9 0.8 18.1 0.7 17.6 1.1 17.4 1.6 17.9 2.3 17.4 2.5 17.6 2.9 19.3 2.4 19.2 2 18.4 2.2 17.9 1.7 18.1 1.2 18.8 1.2ZM3.3 0.2 3 0.8 3.6 1.1 3.9 0.5ZM10.8 -3.4 10.1 -3.1 10.8 -1.5 10.6 -0.3 9.8 0.8 8.2 1.5 8.6 2.2 10.1 1.5 11.2 0 11.4 -1.6ZM0.3 -3.9 0.4 -3.2 2.1 -3.4 3.6 -2.9 1.6 -1.8 0.5 -0.5 0.1 1.8 0.7 2.9 1.7 3.6 3 3.9 4.6 3.8 5.9 3.4 5.7 2.8 4 3.1 2.1 2.9 1.2 2.2 0.9 1.5 0.9 0.4 1.5 -0.7 3.4 -2.1 5.7 -2.6 5.6 -3.3 4.2 -3.4 2.2 -4.1ZM15.1 -4.7 14.4 -4.2 15.5 -2.5 15.7 -1.4 15.3 -0.9 14.6 -0.8 12.9 -1.1 12.6 -0.5 13.1 -0.2 15.2 -0.1 15.9 -0.4 16.4 -1.1 16.2 -2.6ZM17.7 -6.4 17.8 -0.1 18.6 -0.1 18.4 -6.4ZM7.1 -7.1 7.3 -0.1 8.1 -0.1 7.9 -7.1Z" fill="#fff"/>
<path transform="translate(901.08 39.20) scale(1.013 1)" d="M19.6 0.9 19.1 1.6 19.8 1.9 20.1 1.3ZM18.2 0.9 17.8 1.6 18.4 1.9 18.7 1.3ZM7.3 0.9 6.9 1.6 7.5 1.9 7.8 1.3ZM5.9 0.9 5.5 1.6 6.1 1.9 6.4 1.3ZM0.3 -2.6 0.3 -1.9 0.9 -1.2 1.8 -0.9 3.1 -1 3.6 -0.3 4.5 0 5.9 -0.1 6.8 -0.6 7.3 -0.1 8.9 0 9.8 -0.2 10.1 -0.7 11.1 0 12.1 -0.1 12.8 -0.6 13.3 -0.1 14.3 0 15.2 -0.3 15.6 -0.9 16 -0.3 16.8 0 18.1 -0.1 18.9 -0.6 19.5 -0.1 21.2 0 22.4 -0.4 22.9 -1.4 22.8 -2.9 22.3 -4 21.7 -3.8 22.2 -1.9 22.2 -1.2 21.7 -0.8 19.6 -0.9 19.3 -1.3 19.6 -2.7 19 -2.8 18.1 -0.9 16.6 -0.8 16 -1.4 15.7 -3.4 15.1 -3.4 15.1 -1.3 14.6 -0.8 13.3 -1 13.4 -2.7 12.9 -2.8 12.4 -1.2 11.9 -0.8 11.2 -0.8 10.6 -1.1 10.8 -2.6 10.1 -2.8 9.3 -0.9 7.8 -0.8 7.1 -1.3 7.4 -2.7 6.6 -2.8 6.2 -1.2 5.7 -0.8 4.2 -0.9 3.8 -1.5 3.6 -5.2 2.8 -5.2 2.8 -4.4 1.3 -3.9ZM2.8 -3.6 2.9 -1.8 1.4 -1.9 1 -2.4 1.2 -2.9ZM48.1 -6.1 48 -5.4 48.6 -5.2 48.8 -5.9ZM22.5 -6.9 21.8 -7 21.2 -6.6 21.1 -6.1 21.5 -5.4 21.1 -5.2 21.2 -4.8 22.9 -5.2 22.8 -5.7 22.1 -5.5 21.6 -6 21.8 -6.5 22.4 -6.5ZM63.8 -7.1 63.9 -0.1 64.7 -0.1 64.5 -7.1ZM62.2 -7.1 61.4 -7.1 61.6 -1.4 61.2 -0.8 59.2 -0.9 59.4 -2.6 58.8 -3.4 58.1 -3.7 57.1 -3.6 55.6 -2.9 53.8 -0.8 53 -1.2 53.1 -2.6 52.6 -2.8 51.6 -0.9 49.6 -0.8 50.1 -2 50 -3.1 49.3 -3.9 48.1 -4.1 47.3 -3.6 46.8 -2.6 46.9 -1.8 47.4 -0.8 45.1 -0.9 44.5 -1.4 45.1 -1.6 45 -2.3 44.1 -2.4 42.1 -3.4 40.2 -3.4 40.4 -2.7 42.1 -2.7 43.4 -1.9 41.5 -1 39.4 -0.8 38.9 -0.9 38.5 -1.5 38.3 -5.2 37.6 -5.2 37.5 -4.4 35.8 -3.7 35.1 -2.8 35.1 -1.9 36 -1.1 37.8 -1 38.3 -0.3 39.2 0 41.6 -0.2 43.8 -1.3 44.4 -0.4 45.6 0 48.4 -0.3 51.2 0 52.6 -0.8 53.1 -0.2 54.8 0.1 57.1 0.1 58.5 -0.4 60.1 0 61.2 -0.1 62.1 -0.5 62.4 -1.4ZM58.7 -2.3 58.6 -1.4 57.8 -0.9 56.4 -0.6 54.6 -0.8 56 -2.2 56.9 -2.8 58.1 -2.9ZM48.7 -3.4 49.2 -2.9 49.4 -2.1 48.4 -1.1 47.8 -1.6 47.6 -2.5 48.1 -3.2ZM37.6 -3.6 37.7 -1.8 36.1 -1.9 35.8 -2.4 36 -2.9ZM30.5 -7.1 30.7 -0.1 31.4 -0.1 31.2 -7.1ZM28.9 -7.1 28.2 -7.1 28.3 -1.1 27.6 -0.8 26.6 -0.9 25.5 -3.3 24.9 -3.1 25.4 -1.5 25.4 -0.5 24.4 0.8 22.9 1.6 23.2 2.2 25.1 1.2 26.1 -0.4 27.6 0 28.4 -0.2 28.9 -0.7ZM37.6 -7.2 37.4 -6.7 38.1 -6.4 38.3 -6.9ZM36.2 -7.2 36.1 -6.6 36.7 -6.4 36.9 -7.1ZM2.9 -7.2 2.6 -6.7 3.3 -6.4 3.6 -6.9ZM1.4 -7.2 1.3 -6.6 1.9 -6.4 2.1 -7.1Z" fill="#2b579a"/>
<path transform="translate(992.22 39.50) scale(0.912 1)" d="M8.2 -6.1 8.1 -5.4 8.7 -5.2 8.9 -5.9ZM18.6 -2.1 17.8 -3.3 16.7 -3.6 15.8 -2.9 14.6 -0.9 13.4 -0.9 12.9 -1.8 12.8 -7.1 12 -7.1 12.2 -1.4 11.8 -0.8 9.5 -0.9 10.1 -1.6 10.2 -2.5 9.8 -3.5 8.9 -4.1 7.8 -3.9 6.9 -2.9 6.9 -1.8 7.4 -0.8 3 -0.6 1.8 -0.9 1.1 -1.8 1.2 -3.2 0.7 -3.4 0.3 -1.4 1.1 -0.4 2.8 0.1 6.4 0.1 8.4 -0.3 11.4 0 12.7 -0.6 13.4 -0.1 14.2 0 15.4 -0.7 16.3 -0.2 17.5 -0.1 18.3 -0.6ZM16.8 -2.8 17.2 -2.8 17.8 -2.1 17.9 -1.4 17.6 -0.9 16.6 -0.9 15.7 -1.3ZM8.3 -3.4 8.9 -3.2 9.4 -2.3 9.2 -1.7 8.6 -1.1 7.6 -1.9 7.7 -2.8Z" fill="#fff"/>
<path transform="translate(77.71 58.20) scale(0.933 1)" d="M18.2 0.9 17.9 1.4 18.5 1.8 18.8 1.2ZM19.4 -2.2 18.9 -4 18.3 -3.8 18.7 -1.2 18.2 -0.8 16.6 -0.8 15.8 -1.4 16.4 -1.6 16.3 -2.3 15.4 -2.4 13.4 -3.4 11.6 -3.4 11.7 -2.7 13.4 -2.7 14.8 -2 12.8 -1 10 -0.9 9.6 -1.3 9.7 -2 9.1 -2.3 6.8 -0.9 3 -0.6 1.8 -0.9 1.2 -1.3 1.2 -3.2 0.6 -3.4 0.3 -1.4 1.1 -0.4 2.8 0.1 6.4 -0.1 8.8 -1.1 9.8 -0.1 12 -0.1 15.1 -1.3 15.9 -0.2 17.7 0 18.6 -0.2 19.2 -0.7ZM5.3 -5 5.1 -4.4 5.8 -4.1 6 -4.7ZM3.9 -4.9 3.8 -4.3 4.4 -4.1 4.6 -4.8ZM4.7 -6.1 4.4 -5.6 4.8 -5.2 5.1 -5.2 5.3 -5.8Z" fill="#333"/>
<path transform="translate(63.50 74.90) scale(0.946 1)" d="M16.2 0.9 15.8 1.4 16.4 1.8 16.8 1.2ZM9.7 -0.5 10.6 -0.1 11.9 0 13.2 -0.8 13.9 -0.1 15.1 0 15.8 -0.2 16.3 -0.7 16.9 -0.1 18.6 0 19.9 -0.6 20.5 -0.1 22.2 0 23 -0.2 23.4 -0.7 24.4 0 25.4 -0.1 26.1 -0.6 26.6 -0.1 27.7 0 28.9 -0.8 29.1 -2.4 28.4 -4 27.8 -3.8 28.4 -2.1 28.4 -1.3 27.9 -0.8 26.6 -1 26.6 -2.7 25.9 -2.8 25.6 -1.2 25.2 -0.8 23.9 -1 24 -2.6 23.3 -2.8 22.8 -1.1 22.4 -0.8 21.4 -0.8 20.4 -1.1 20.6 -2.7 19.8 -2.8 19.4 -1.2 18.9 -0.8 17.8 -0.8 16.8 -1.2 16.9 -2.7 16.2 -2.8 15.8 -1.1 14.6 -0.8 13.9 -1.2 12.1 -4.7 11.5 -4.2 12.7 -2.2 12.7 -1.2 11.7 -0.8 10.1 -1.1ZM20.5 -4.8 20.2 -4.2 20.9 -3.9 21.2 -4.5ZM19.1 -4.8 18.9 -4.1 19.6 -3.9 19.8 -4.6ZM30.4 -7.1 30.6 -0.1 31.3 -0.1 31.1 -7.1ZM7.7 -7.1 7.9 -0.1 8.6 -0.1 8.4 -7.1ZM6.1 -7.1 5.3 -7.1 5.5 -0.9 5.1 0.6 3.9 1.4 1.9 1.2 1.1 0.2 1.4 -1.5 0.7 -1.8 0.3 0.4 0.6 1.2 1.4 1.9 2.6 2.2 4 2.2 4.9 1.8 5.8 0.9 6.2 -0.9Z" fill="#333"/>
<path transform="translate(73.23 91.20) scale(0.999 1)" d="M7.1 0.9 6.7 1.6 7.3 1.9 7.6 1.3ZM5.8 0.9 5.3 1.6 5.9 1.9 6.2 1.3ZM8.7 -0.5 9.6 -0.1 10.9 0 12.2 -0.8 12.9 -0.1 14.1 0 15.9 -0.4 17.8 -1.3 18.7 -0.2 20.9 -0.1 22.1 -0.7 22.3 -2.3 21.9 -3.9 21.2 -3.8 21.6 -2 21.5 -1.1 21.1 -0.8 19.3 -0.8 18.5 -1.4 19.1 -1.6 19 -2.3 18.1 -2.4 16.1 -3.4 14.2 -3.4 14.4 -2.7 16.1 -2.7 17.4 -1.9 15.5 -1 13.6 -0.8 12.9 -1.2 11.1 -4.7 10.5 -4.2 11.7 -2.2 11.7 -1.2 10.7 -0.8 9.1 -1.1ZM0.4 -0.5 1.7 0 3.2 -0.1 3.9 -0.8 5.1 0 7.1 -0.4 7.6 -1.3 7.2 -3.9 6.4 -3.8 6.9 -2 6.8 -1.1 5.2 -0.8 4.6 -1.2 2.8 -4.7 2.2 -4.2 3.4 -2.2 3.4 -1.2 2.4 -0.8 0.8 -1.1ZM21.9 -6.1 21.7 -5.5 22.4 -5.2 22.6 -5.8ZM20.5 -6 20.4 -5.4 21 -5.2 21.2 -5.9Z" fill="#333"/>
<path transform="translate(77.63 110.60) scale(0.929 1)" d="M5.3 0.9 5.1 1.5 5.6 1.8 5.9 1.2ZM4 0.9 3.8 1.6 4.4 1.8 4.6 1.1ZM17.9 -3.8 17.1 -3.6 17.7 -1.4 17.1 -0.8 15.1 -0.9 14.7 -1.4 15.2 -1.6 15.1 -2.2 12.2 -3.3 10.8 -3.2 10.8 -2.6 12.4 -2.6 13.7 -1.9 11.8 -0.9 9.8 -0.8 9.3 -1.1 8.6 -3.1 7.9 -2.9 8.4 -1.5 8.4 -0.4 7.4 0.8 6.1 1.5 6.3 2.1 7.9 1.3 9.1 -0.4 9.8 0 11.1 -0.1 14 -1.2 14.6 -0.3 15.2 -0.1 16.5 0 17.8 -0.4 18.3 -1.2ZM5.5 -3.8 4.8 -3.6 5.3 -1.4 4.7 -0.8 3.3 -0.8 2.2 -3.1 1.5 -2.9 2.1 -1.5 2.1 -0.4 1.1 0.8 -0.2 1.5 0 2.1 1.6 1.3 2.8 -0.4 4.1 0 5.7 -0.6 5.9 -2.2ZM18 -5.8 17.8 -5.1 18.3 -4.9 18.6 -5.4ZM16.8 -5.8 16.4 -5.2 17 -4.9 17.3 -5.4Z" fill="#777"/>
<path transform="translate(144.03 69.40) scale(0.904 1)" d="M30.8 0.9 30.4 1.5 31 1.9 31.4 1.3ZM25.8 0.9 25.4 1.5 25.9 1.9 26.4 1.3ZM2.4 -3.6 1.7 -3.2 2.4 -1.5 2.1 -0.1 1.1 1 -0.2 1.6 0 2.3 1.8 1.4 2.8 0.2 3.1 -1.3ZM17.9 -0.5 18.9 -0.1 20.3 0 21.8 -0.8 22.4 -0.1 23.7 0 25.5 -0.4 27.5 -1.4 28.2 -0.3 30.2 0 31.2 -0.2 31.8 -0.7 32.1 -2.2 31.6 -4.2 30.8 -3.8 31.3 -2.1 31.2 -1.2 30.8 -0.9 29.3 -0.8 28.2 -1.5 28.8 -1.8 28.8 -2.4 28 -2.5 25.7 -3.6 24.4 -3.7 23.8 -3.5 23.9 -2.8 25.5 -2.9 27.1 -2.1 25.1 -1.1 23 -0.8 22.3 -1.3 20.6 -4.9 19.9 -4.4 21.1 -2.3 21.1 -1.2 20.3 -0.8 18.3 -1.2ZM14.2 -2 12.6 -3.8 10.9 -5.2 10.3 -4.6 10.8 -4.2 9.9 -3.6 9.6 -2.8 10.2 -0.9 8 -0.8 7.4 -3.1 6.7 -3.5 5.9 -3.5 4.9 -2.6 4.6 -1 5.2 -0.2 7 0.1 6.2 1 4.3 1.6 4.4 2.3 5.4 2.2 6.9 1.5 7.9 0 9.8 -0.1 10.9 -0.4 12.3 0 13.5 -0.1 14.2 -0.8ZM12.8 -2.6 13.3 -1.9 13.5 -1.1 13.1 -0.8 11.9 -0.9ZM5.8 -2.6 6.3 -2.8 6.9 -2.3 7.1 -0.8 5.8 -0.9 5.4 -1.2 5.4 -1.9ZM11.4 -3.6 12 -2.6 11.8 -2 11.1 -1.3 10.4 -2.1 10.4 -2.9 10.8 -3.4ZM1.8 -5.8 1.3 -5.2 1.9 -4.8 2.3 -5.4ZM33.4 -6.8 33.6 -0.1 34.4 -0.1 34.2 -6.8ZM34.2 -9.8 33.7 -9.9 32.9 -9.5 32.8 -8.6 33.2 -8.1 32.8 -7.9 32.9 -7.4 34.8 -8 34.6 -8.4 33.9 -8.2 33.3 -8.8 33.5 -9.3 34.2 -9.4Z" fill="#333"/>
<path transform="translate(202.20 69.40) scale(0.813 1)" d="M33.6 1 33.1 1 32.7 1.4 32.7 2 33.1 2.4 34 2 34 1.4ZM28.4 0.9 27.9 0.9 27.5 1.4 27.5 1.9 27.9 2.3 28.8 1.9 28.8 1.3ZM2.9 -4 1.5 -3.4 2.1 -2 2.2 -1.1 1.4 0.1 -0.4 1.1 0.1 2.3 2.1 1.4 3.4 -0.2 3.6 -2.1ZM19.6 -0.4 22.2 0 23.8 -0.6 24.6 -0.1 25.9 0 27.7 -0.3 29.6 -1.2 30.9 -0.1 33.1 -0.1 34.5 -0.8 34.9 -1.9 34.8 -3.1 34.3 -4.9 33 -4.6 33.4 -1.9 33.1 -1.5 31.5 -1.4 30.7 -1.8 31.5 -1.9 31.4 -3.3 30.4 -3.4 27.9 -4.5 25.8 -4.4 26 -3.1 27.8 -3.1 29.4 -2.5 27.4 -1.6 24.9 -1.4 24.3 -1.9 23.7 -3.6 22.6 -5.4 21.4 -4.6 22.6 -2.7 22.6 -1.8 22.1 -1.4 20.1 -1.8ZM16 -2.1 14.8 -3.6 11.9 -5.8 11.1 -4.8 11.5 -4.4 10.6 -3.3 10.8 -1.4 9.1 -1.4 8.8 -2.8 7.9 -3.9 7.1 -4.2 6.3 -4.1 5.2 -3.1 4.8 -1.2 5.5 -0.2 7.2 0.1 6.4 0.6 4.6 0.9 4.9 2.3 6.4 2.1 7.5 1.6 8.8 0 10.8 -0.1 12.1 -0.4 13.4 0 14.9 -0.1 15.9 -0.8ZM14 -2.6 14.6 -2 14.4 -1.3 13.5 -1.4ZM6.6 -2.7 7.4 -2.4 7.6 -1.4 6.2 -1.6 6.2 -2.2ZM12.2 -3.6 12.8 -3.1 12.3 -1.9 11.8 -2.6 11.8 -3.2ZM2.2 -6.6 1.8 -6.2 1.8 -5.6 2.2 -5.2 2.8 -5.2 3.2 -5.7 3.1 -6.2ZM36.1 -6.9 36.2 -0.1 37.7 -0.1 37.5 -6.8ZM37.2 -10.2 36.2 -10.2 35.8 -9.8 35.6 -8.9 36.1 -8.4 35.6 -8.2 35.7 -7.6 37.7 -8.1 37.5 -8.8 36.8 -8.6 36.4 -9 36.6 -9.5 37.2 -9.5Z" fill="#111"/>
<path transform="translate(258.95 69.40) scale(1.001 1) skewX(-12)" d="M30.8 0.9 30.4 1.5 31 1.9 31.4 1.3ZM25.8 0.9 25.4 1.5 25.9 1.9 26.4 1.3ZM2.4 -3.6 1.7 -3.2 2.4 -1.5 2.1 -0.1 1.1 1 -0.2 1.6 0 2.3 1.8 1.4 2.8 0.2 3.1 -1.3ZM17.9 -0.5 18.9 -0.1 20.3 0 21.8 -0.8 22.4 -0.1 23.7 0 25.5 -0.4 27.5 -1.4 28.2 -0.3 30.2 0 31.2 -0.2 31.8 -0.7 32.1 -2.2 31.6 -4.2 30.8 -3.8 31.3 -2.1 31.2 -1.2 30.8 -0.9 29.3 -0.8 28.2 -1.5 28.8 -1.8 28.8 -2.4 28 -2.5 25.7 -3.6 24.4 -3.7 23.8 -3.5 23.9 -2.8 25.5 -2.9 27.1 -2.1 25.1 -1.1 23 -0.8 22.3 -1.3 20.6 -4.9 19.9 -4.4 21.1 -2.3 21.1 -1.2 20.3 -0.8 18.3 -1.2ZM14.2 -2 12.6 -3.8 10.9 -5.2 10.3 -4.6 10.8 -4.2 9.9 -3.6 9.6 -2.8 10.2 -0.9 8 -0.8 7.4 -3.1 6.7 -3.5 5.9 -3.5 4.9 -2.6 4.6 -1 5.2 -0.2 7 0.1 6.2 1 4.3 1.6 4.4 2.3 5.4 2.2 6.9 1.5 7.9 0 9.8 -0.1 10.9 -0.4 12.3 0 13.5 -0.1 14.2 -0.8ZM12.8 -2.6 13.3 -1.9 13.5 -1.1 13.1 -0.8 11.9 -0.9ZM5.8 -2.6 6.3 -2.8 6.9 -2.3 7.1 -0.8 5.8 -0.9 5.4 -1.2 5.4 -1.9ZM11.4 -3.6 12 -2.6 11.8 -2 11.1 -1.3 10.4 -2.1 10.4 -2.9 10.8 -3.4ZM1.8 -5.8 1.3 -5.2 1.9 -4.8 2.3 -5.4ZM33.4 -6.8 33.6 -0.1 34.4 -0.1 34.2 -6.8ZM34.2 -9.8 33.7 -9.9 32.9 -9.5 32.8 -8.6 33.2 -8.1 32.8 -7.9 32.9 -7.4 34.8 -8 34.6 -8.4 33.9 -8.2 33.3 -8.8 33.5 -9.3 34.2 -9.4Z" fill="#f0401c"/>
<path transform="translate(316.93 69.40) scale(0.901 1)" d="M30.8 0.9 30.4 1.5 31 1.9 31.4 1.3ZM25.8 0.9 25.4 1.5 25.9 1.9 26.4 1.3ZM2.4 -3.6 1.7 -3.2 2.4 -1.5 2.1 -0.1 1.1 1 -0.2 1.6 0 2.3 1.8 1.4 2.8 0.2 3.1 -1.3ZM17.9 -0.5 18.9 -0.1 20.3 0 21.8 -0.8 22.4 -0.1 23.7 0 25.5 -0.4 27.5 -1.4 28.2 -0.3 30.2 0 31.2 -0.2 31.8 -0.7 32.1 -2.2 31.6 -4.2 30.8 -3.8 31.3 -2.1 31.2 -1.2 30.8 -0.9 29.3 -0.8 28.2 -1.5 28.8 -1.8 28.8 -2.4 28 -2.5 25.7 -3.6 24.4 -3.7 23.8 -3.5 23.9 -2.8 25.5 -2.9 27.1 -2.1 25.1 -1.1 23 -0.8 22.3 -1.3 20.6 -4.9 19.9 -4.4 21.1 -2.3 21.1 -1.2 20.3 -0.8 18.3 -1.2ZM14.2 -2 12.6 -3.8 10.9 -5.2 10.3 -4.6 10.8 -4.2 9.9 -3.6 9.6 -2.8 10.2 -0.9 8 -0.8 7.4 -3.1 6.7 -3.5 5.9 -3.5 4.9 -2.6 4.6 -1 5.2 -0.2 7 0.1 6.2 1 4.3 1.6 4.4 2.3 5.4 2.2 6.9 1.5 7.9 0 9.8 -0.1 10.9 -0.4 12.3 0 13.5 -0.1 14.2 -0.8ZM12.8 -2.6 13.3 -1.9 13.5 -1.1 13.1 -0.8 11.9 -0.9ZM5.8 -2.6 6.3 -2.8 6.9 -2.3 7.1 -0.8 5.8 -0.9 5.4 -1.2 5.4 -1.9ZM11.4 -3.6 12 -2.6 11.8 -2 11.1 -1.3 10.4 -2.1 10.4 -2.9 10.8 -3.4ZM1.8 -5.8 1.3 -5.2 1.9 -4.8 2.3 -5.4ZM33.4 -6.8 33.6 -0.1 34.4 -0.1 34.2 -6.8ZM34.2 -9.8 33.7 -9.9 32.9 -9.5 32.8 -8.6 33.2 -8.1 32.8 -7.9 32.9 -7.4 34.8 -8 34.6 -8.4 33.9 -8.2 33.3 -8.8 33.5 -9.3 34.2 -9.4Z" fill="#333"/>
<path transform="translate(374.83 69.40) scale(0.907 1)" d="M30.8 0.9 30.4 1.5 31 1.9 31.4 1.3ZM25.8 0.9 25.4 1.5 25.9 1.9 26.4 1.3ZM2.4 -3.6 1.7 -3.2 2.4 -1.5 2.1 -0.1 1.1 1 -0.2 1.6 0 2.3 1.8 1.4 2.8 0.2 3.1 -1.3ZM17.9 -0.5 18.9 -0.1 20.3 0 21.8 -0.8 22.4 -0.1 23.7 0 25.5 -0.4 27.5 -1.4 28.2 -0.3 30.2 0 31.2 -0.2 31.8 -0.7 32.1 -2.2 31.6 -4.2 30.8 -3.8 31.3 -2.1 31.2 -1.2 30.8 -0.9 29.3 -0.8 28.2 -1.5 28.8 -1.8 28.8 -2.4 28 -2.5 25.7 -3.6 24.4 -3.7 23.8 -3.5 23.9 -2.8 25.5 -2.9 27.1 -2.1 25.1 -1.1 23 -0.8 22.3 -1.3 20.6 -4.9 19.9 -4.4 21.1 -2.3 21.1 -1.2 20.3 -0.8 18.3 -1.2ZM14.2 -2 12.6 -3.8 10.9 -5.2 10.3 -4.6 10.8 -4.2 9.9 -3.6 9.6 -2.8 10.2 -0.9 8 -0.8 7.4 -3.1 6.7 -3.5 5.9 -3.5 4.9 -2.6 4.6 -1 5.2 -0.2 7 0.1 6.2 1 4.3 1.6 4.4 2.3 5.4 2.2 6.9 1.5 7.9 0 9.8 -0.1 10.9 -0.4 12.3 0 13.5 -0.1 14.2 -0.8ZM12.8 -2.6 13.3 -1.9 13.5 -1.1 13.1 -0.8 11.9 -0.9ZM5.8 -2.6 6.3 -2.8 6.9 -2.3 7.1 -0.8 5.8 -0.9 5.4 -1.2 5.4 -1.9ZM11.4 -3.6 12 -2.6 11.8 -2 11.1 -1.3 10.4 -2.1 10.4 -2.9 10.8 -3.4ZM1.8 -5.8 1.3 -5.2 1.9 -4.8 2.3 -5.4ZM33.4 -6.8 33.6 -0.1 34.4 -0.1 34.2 -6.8ZM34.2 -9.8 33.7 -9.9 32.9 -9.5 32.8 -8.6 33.2 -8.1 32.8 -7.9 32.9 -7.4 34.8 -8 34.6 -8.4 33.9 -8.2 33.3 -8.8 33.5 -9.3 34.2 -9.4Z" fill="#333"/>
<path transform="translate(431.73 69.40) scale(0.913 1)" d="M30.8 0.9 30.4 1.5 31 1.9 31.4 1.3ZM25.8 0.9 25.4 1.5 25.9 1.9 26.4 1.3ZM2.4 -3.6 1.7 -3.2 2.4 -1.5 2.1 -0.1 1.1 1 -0.2 1.6 0 2.3 1.8 1.4 2.8 0.2 3.1 -1.3ZM17.9 -0.5 18.9 -0.1 20.3 0 21.8 -0.8 22.4 -0.1 23.7 0 25.5 -0.4 27.5 -1.4 28.2 -0.3 30.2 0 31.2 -0.2 31.8 -0.7 32.1 -2.2 31.6 -4.2 30.8 -3.8 31.3 -2.1 31.2 -1.2 30.8 -0.9 29.3 -0.8 28.2 -1.5 28.8 -1.8 28.8 -2.4 28 -2.5 25.7 -3.6 24.4 -3.7 23.8 -3.5 23.9 -2.8 25.5 -2.9 27.1 -2.1 25.1 -1.1 23 -0.8 22.3 -1.3 20.6 -4.9 19.9 -4.4 21.1 -2.3 21.1 -1.2 20.3 -0.8 18.3 -1.2ZM14.2 -2 12.6 -3.8 10.9 -5.2 10.3 -4.6 10.8 -4.2 9.9 -3.6 9.6 -2.8 10.2 -0.9 8 -0.8 7.4 -3.1 6.7 -3.5 5.9 -3.5 4.9 -2.6 4.6 -1 5.2 -0.2 7 0.1 6.2 1 4.3 1.6 4.4 2.3 5.4 2.2 6.9 1.5 7.9 0 9.8 -0.1 10.9 -0.4 12.3 0 13.5 -0.1 14.2 -0.8ZM12.8 -2.6 13.3 -1.9 13.5 -1.1 13.1 -0.8 11.9 -0.9ZM5.8 -2.6 6.3 -2.8 6.9 -2.3 7.1 -0.8 5.8 -0.9 5.4 -1.2 5.4 -1.9ZM11.4 -3.6 12 -2.6 11.8 -2 11.1 -1.3 10.4 -2.1 10.4 -2.9 10.8 -3.4ZM1.8 -5.8 1.3 -5.2 1.9 -4.8 2.3 -5.4ZM33.4 -6.8 33.6 -0.1 34.4 -0.1 34.2 -6.8ZM34.2 -9.8 33.7 -9.9 32.9 -9.5 32.8 -8.6 33.2 -8.1 32.8 -7.9 32.9 -7.4 34.8 -8 34.6 -8.4 33.9 -8.2 33.3 -8.8 33.5 -9.3 34.2 -9.4Z" fill="#333"/>
<path transform="translate(489.43 69.40) scale(0.921 1)" d="M30.8 0.9 30.4 1.5 31 1.9 31.4 1.3ZM25.8 0.9 25.4 1.5 25.9 1.9 26.4 1.3ZM2.4 -3.6 1.7 -3.2 2.4 -1.5 2.1 -0.1 1.1 1 -0.2 1.6 0 2.3 1.8 1.4 2.8 0.2 3.1 -1.3ZM17.9 -0.5 18.9 -0.1 20.3 0 21.8 -0.8 22.4 -0.1 23.7 0 25.5 -0.4 27.5 -1.4 28.2 -0.3 30.2 0 31.2 -0.2 31.8 -0.7 32.1 -2.2 31.6 -4.2 30.8 -3.8 31.3 -2.1 31.2 -1.2 30.8 -0.9 29.3 -0.8 28.2 -1.5 28.8 -1.8 28.8 -2.4 28 -2.5 25.7 -3.6 24.4 -3.7 23.8 -3.5 23.9 -2.8 25.5 -2.9 27.1 -2.1 25.1 -1.1 23 -0.8 22.3 -1.3 20.6 -4.9 19.9 -4.4 21.1 -2.3 21.1 -1.2 20.3 -0.8 18.3 -1.2ZM14.2 -2 12.6 -3.8 10.9 -5.2 10.3 -4.6 10.8 -4.2 9.9 -3.6 9.6 -2.8 10.2 -0.9 8 -0.8 7.4 -3.1 6.7 -3.5 5.9 -3.5 4.9 -2.6 4.6 -1 5.2 -0.2 7 0.1 6.2 1 4.3 1.6 4.4 2.3 5.4 2.2 6.9 1.5 7.9 0 9.8 -0.1 10.9 -0.4 12.3 0 13.5 -0.1 14.2 -0.8ZM12.8 -2.6 13.3 -1.9 13.5 -1.1 13.1 -0.8 11.9 -0.9ZM5.8 -2.6 6.3 -2.8 6.9 -2.3 7.1 -0.8 5.8 -0.9 5.4 -1.2 5.4 -1.9ZM11.4 -3.6 12 -2.6 11.8 -2 11.1 -1.3 10.4 -2.1 10.4 -2.9 10.8 -3.4ZM1.8 -5.8 1.3 -5.2 1.9 -4.8 2.3 -5.4ZM33.4 -6.8 33.6 -0.1 34.4 -0.1 34.2 -6.8ZM34.2 -9.8 33.7 -9.9 32.9 -9.5 32.8 -8.6 33.2 -8.1 32.8 -7.9 32.9 -7.4 34.8 -8 34.6 -8.4 33.9 -8.2 33.3 -8.8 33.5 -9.3 34.2 -9.4Z" fill="#333"/>
<path transform="translate(142.60 88.20) scale(1.061 1)" d="M29.2 0.9 28.8 1.4 29.4 1.8 29.8 1.2ZM14.8 0.9 14.4 1.4 15.1 1.8 15.4 1.2ZM0.4 -0.5 1.3 -0.1 2.6 0 3.9 -0.8 4.6 -0.1 6 0 8.2 -0.3 9.9 -1.1 9.8 -1.6 8.2 -1.1 7.1 -1.8 6.9 -2.2 7.1 -3.2 7.8 -3.6 8.9 -3.6 9.1 -4.1 8.6 -4.4 7.7 -4.4 6.6 -3.9 6.1 -3 6.2 -1.9 7.1 -0.9 4.9 -0.9 2.8 -4.7 2.2 -4.2 3.4 -2.2 3.4 -1.2 2.4 -0.8 0.8 -1.1ZM18.6 -6.1 18.4 -5.5 19.1 -5.2 19.3 -5.8ZM17.2 -6 17.1 -5.4 17.7 -5.2 17.9 -5.9ZM29.9 -4 29.1 -3.8 29.7 -1.9 29.6 -1.2 29.1 -0.8 27.6 -0.8 27.1 -1.4 26.8 -7.1 26.1 -7.1 26.1 -2.4 23.1 -5.6 22.7 -5.1 25.7 -1.6 24.6 -0.9 22.9 -0.9 22.8 -0.1 24.8 -0.1 26.2 -1.2 26.6 -0.5 27.1 -0.1 28.6 0 29.6 -0.2 30.4 -1.4ZM11.1 -7.1 11.3 -1.2 11.9 -0.2 13.7 0 14.4 -0.2 14.9 -0.7 15.6 -0.1 17.1 0 18.1 -0.2 18.8 -0.7 19 -2.3 18.5 -4 17.8 -3.8 18.3 -2 18.1 -0.9 15.6 -0.9 15.3 -1.3 15.5 -2.7 15 -2.8 14.2 -0.9 12.4 -0.9 12.1 -1.6 11.9 -7.1Z" fill="#555"/>
<path transform="translate(199.33 88.20) scale(0.983 1)" d="M13.9 -3.2 13.2 -2.8 13.9 -0.4 13.6 0.4 13.1 1.1 11.8 1.5 10 1.1 9.4 0.2 9.7 -1.5 9 -1.8 8.6 0.4 9.1 1.4 10.1 2.1 11.1 2.2 12.6 2.1 13.8 1.5 14.4 0.4 14.6 -0.5 14.4 -1.9ZM23.5 -4.8 23.4 -4.1 24 -3.9 24.2 -4.6ZM11.3 -4.9 11.2 -4.2 11.8 -4.1 12 -4.8ZM2.7 -6.8 2 -6.6 2.6 -3.9 2.9 -0.1 3.4 -0.1 3.4 -3.2ZM34.2 -7.1 34.4 -0.1 35.2 -0.1 35 -7.1ZM32.7 -7.1 31.9 -7.1 32.1 -1.4 31.8 -0.9 30.6 -0.8 29.1 -1.1 30.1 -2.8 29.9 -3.5 29.1 -4.1 27.6 -4 26.3 -3.2 26.4 -2.4 27.6 -1.1 26.1 -0.8 24.6 -0.9 24.3 -1.3 24.5 -2.7 24 -2.8 23.2 -0.9 21.5 -0.8 20.9 -2.9 19.6 -3.4 18.6 -2.7 18.2 -1.1 18.8 -0.2 20.5 0.1 19.7 1 18.1 1.4 18.1 2.2 20.3 1.5 21.4 0 23.1 -0.1 23.9 -0.7 24.3 -0.2 25.2 0 26.9 -0.1 28.2 -0.6 30.4 0 32.2 -0.2 32.9 -1.4ZM19.5 -2.6 20.1 -2.6 20.4 -2.2 20.6 -0.8 19.5 -0.8 19 -1.1 19.1 -2.1ZM26.9 -2.9 28.6 -3.4 29.2 -3 29.3 -2.5 28.4 -1.5ZM15.9 -7.1 16.1 -0.1 16.9 -0.1 16.7 -7.1Z" fill="#555"/>
<path transform="translate(261.31 88.20) scale(0.941 1)" d="M16.6 0.9 16.2 1.4 16.8 1.8 17.1 1.2ZM11.1 -4 10.2 -3.8 10.8 -2.1 10.8 -1.1 10.4 -0.8 8.9 -1 9 -2.7 8.5 -2.8 7.9 -1.1 7.6 -0.8 6.8 -0.8 6.3 -1.2 5.7 -2.8 5.1 -2.6 5.5 0.1 4.9 1.1 3.6 1.5 1.7 1.1 1.1 0.2 1.4 -1.5 0.8 -1.8 0.3 -0.5 0.4 0.8 1.7 2 3.8 2.2 5.4 1.6 6.3 -0.2 7.4 0 8.4 -0.6 9.4 0 10.8 -0.2 11.5 -1.2ZM20.9 -4.8 20.6 -4.2 21.3 -3.9 21.6 -4.5ZM19.4 -4.8 19.3 -4.1 19.9 -3.9 20.1 -4.6ZM24.8 -7 24.6 -6.4 25.2 -6.1 25.5 -6.7ZM23.4 -6.9 23.2 -6.3 23.9 -6.1 24.1 -6.8ZM27.4 -7.1 27.6 -0.1 28.3 -0.1 28.1 -7.1ZM12.8 -7.1 13 -1.2 13.2 -0.6 13.8 -0.1 15.8 -0.1 16.7 -0.7 17.1 -0.2 17.9 0 19.4 -0.1 20.3 -0.6 21.1 -0.1 23.8 -0.1 25 -0.4 26 -1.5 25.9 -3.9 25.3 -4.8 24.3 -5 23.3 -4.2 22.9 -2.6 23.8 -1.7 25.2 -1.7 24.7 -1 23.1 -0.8 21.1 -0.9 20.7 -1.3 20.9 -2.7 20.2 -2.8 19.9 -1.4 19.4 -0.9 17.7 -0.8 17.1 -1.3 17.2 -2.7 16.6 -2.8 15.9 -0.9 14.3 -0.8 13.8 -1.6 13.6 -7.1ZM24.2 -4.2 24.7 -4.2 25.1 -3.9 25.4 -2.9 25.3 -2.4 24.2 -2.4 23.7 -2.8 23.8 -3.6Z" fill="#555"/>
<path transform="translate(489.34 88.20) scale(1.136 1)" d="M4.2 3.2 3.8 3.8 4.4 4.1 4.7 3.6ZM2.8 3.2 2.4 3.8 3 4.1 3.3 3.6ZM7.4 -3.9 6.6 -4.2 5.5 -4.1 4.8 -3.7 3.9 -2.6 3.9 -1.4 6.2 -0.1 5.6 0.9 3.8 1.5 1.8 1.2 1.1 0.2 1.4 -1.5 0.7 -1.8 0.3 0.4 0.8 1.4 2 2.1 3.9 2.2 6.2 1.3 6.9 0.3 7 -0.4 6.4 -0.9 4.8 -1.7 4.6 -2.2 5.4 -3.2 6 -3.4 7.1 -3.2ZM10.5 -4.7 9.8 -4.2 10.9 -2.5 11.1 -1.4 10.8 -0.9 10 -0.8 8.4 -1.1 8 -0.5 8.5 -0.2 10.6 -0.1 11.4 -0.4 11.8 -1.1 11.7 -2.6ZM13.1 -7.1 13.3 -1.2 13.9 -0.2 14.8 0 16.8 -0.1 19.9 -0.9 19.7 -1.6 18.1 -1.1 17.2 -1.6 16.8 -2.2 16.8 -2.8 17.2 -3.4 18.9 -3.6 19 -4.2 18.6 -4.4 17.2 -4.2 16.1 -3.2 16.1 -1.9 16.9 -0.8 14.4 -0.9 14.1 -1.6 13.9 -7.1Z" fill="#555"/>
<path transform="translate(321.82 111.30) scale(0.947 1)" d="M16.8 -5.8 16.5 -5.2 17.1 -4.9 17.4 -5.4ZM19 -6.1 19.1 -0.1 19.9 -0.1 19.7 -6.1ZM8.2 -6.8 8.4 -1.2 8.8 -0.3 10.8 -0.1 11.8 -0.9 13.2 0.1 13.9 0.1 14.6 -0.5 15.2 -0.1 16.1 0 17.2 -0.3 17.6 -0.8 17.8 -2.2 17.3 -3.8 16.6 -3.6 17.1 -1.8 16.7 -0.8 15.3 -0.8 14 -3.1 13.4 -3.4 12.4 -3.2 10.7 -0.8 9.5 -0.8 9.1 -1.9 8.9 -6.6ZM12.9 -2.8 13.6 -2.4 14.1 -1.4 13.8 -0.6 13 -0.7 12.1 -1.6ZM1.9 -6.8 2 -1.3 1.5 -0.7 0.3 -0.8 0.2 -0.1 4.2 0.1 6.4 -0.6 6.9 -1.4 7 -2.2 6.6 -3.1 6.1 -3.4 4.8 -3.5 2.7 -2.3 2.6 -6.8ZM6.2 -2.3 6.2 -1.5 5.4 -0.9 2.4 -0.8 4.4 -2.6 5.6 -2.8ZM19.8 -8.9 19.2 -8.9 18.5 -8.6 18.4 -7.9 18.8 -7.4 18.4 -7.2 18.5 -6.8 20.2 -7.2 20 -7.7 19.3 -7.5 18.8 -8.1 19.2 -8.5 19.7 -8.4Z" fill="#777"/>
<path transform="translate(631.28 110.90) scale(1.014 1)" d="M1.7 -4.4 1.2 -3.9 1.5 -3.7 0.4 -2.2 0.3 -1.1 0.9 -0.3 2.2 -0.1 3.2 -0.6 3.5 -2 2.9 -3.2ZM1.9 -3.3 2.7 -2.5 2.9 -1.4 2.4 -0.9 1.9 -0.8 1.1 -1.2 1 -1.9ZM15.3 -4.1 14.7 -4.7 13.9 -4.8 12.9 -3.9 12.6 -2.9 12.8 -2.1 13.7 -1.6 14.9 -1.6 14.5 -1.1 13.5 -0.8 10.6 -0.8 11.1 -1.7 11.2 -2.5 10.8 -3.4 9.9 -3.9 8.9 -3.8 8.2 -3 8 -2 8.5 -0.8 6.8 -0.8 5.7 -3.1 5 -2.9 5.6 -1.5 5.5 -0.4 4.6 0.8 3.2 1.5 3.4 2.1 5.1 1.3 6.2 -0.4 6.9 0 9.5 -0.3 12.7 0 14.8 -0.4 15.4 -1.1 15.7 -2ZM9.6 -3.2 10.3 -2.8 10.4 -1.9 9.4 -1.1 8.9 -1.5 8.8 -2.4ZM13.9 -4 14.4 -4 14.8 -3.6 14.9 -2.3 13.8 -2.2 13.4 -2.5 13.4 -3.3ZM10 -5.9 9.8 -5.2 10.3 -5 10.6 -5.6ZM8.8 -5.9 8.4 -5.3 9 -5 9.3 -5.6ZM2.4 -6.2 2.2 -5.6 2.8 -5.4 3.1 -5.9ZM1.2 -6.2 0.9 -5.7 1.4 -5.4 1.8 -5.9ZM13.9 -6.7 13.6 -6.1 14.1 -5.8 14.4 -6.4Z" fill="#777"/>
<path transform="translate(821.23 111.20) scale(0.909 1)" d="M9.3 -5.2 9 -4.7 9.6 -4.4 9.9 -4.9ZM0.2 -0.1 4.2 0.1 6.1 -0.4 7.6 0 8.9 -0.1 13 -1.6 13 -2.1 10.3 -3.2 8.6 -3.2 8.6 -2.6 10.2 -2.6 11.5 -1.9 9.6 -0.9 7.3 -0.8 6.7 -0.9 7 -1.7 6.8 -2.9 5.9 -3.5 4.4 -3.4 2.8 -2.2 2.6 -6.8 1.9 -6.8 2 -1.3 1.5 -0.7 0.3 -0.8ZM6.2 -2.3 6.2 -1.5 5.4 -0.9 2.4 -0.8 4.4 -2.6 5.6 -2.8Z" fill="#777"/>
<path transform="translate(831.58 65.50) scale(1.210 1)" d="M8.4 -3.7 7.8 -3 8.7 -2.2 9.4 -2.9ZM2.7 -6.8 2 -6.6 2.6 -3.9 2.9 -0.1 3.4 -0.1 3.4 -3.2Z" fill="#444"/>
<g clip-path="url(#cpa)"><path transform="translate(878.30 64.90) scale(1.275 1)" d="M3.9 3.2 3.5 3.8 4.1 4.1 4.4 3.6ZM2.6 3.2 2.1 3.8 2.8 4.1 3.1 3.6ZM14.2 -4 13.4 -3.8 13.9 -2.1 13.9 -1.3 13.4 -0.8 12.1 -1 12.2 -2.7 11.7 -2.8 11.1 -1.1 10.5 -0.8 9.7 -0.8 9.3 -1.2 9.6 -2.6 8.9 -2.8 8.6 -1.5 8 -0.8 6.9 -0.8 4.9 -1.4 4.8 -0.7 6.2 0 6.1 0.6 5.2 1.2 2.9 1.5 1.6 1.1 1.1 0.2 1.4 -1.5 0.8 -1.8 0.3 -0.5 0.4 0.7 1.7 2 4 2.2 5.9 1.7 6.8 1 7 0 8.3 -0.1 8.9 -0.7 9.9 0 10.9 -0.1 11.6 -0.6 12.3 -0.1 13.6 -0.1 14.3 -0.6 14.6 -1.2ZM26.7 -6.4 26.8 -0.1 27.6 -0.1 27.4 -6.4ZM15.9 -7.1 16.1 -1.2 16.7 -0.2 18.5 0 19.3 -0.2 19.7 -0.7 20.7 0 21.7 -0.1 22.4 -0.6 22.9 -0.1 24 0 25.1 -0.6 25.4 -1.2 25.4 -2.4 24.9 -4 24.1 -3.8 24.7 -2.1 24.7 -1.3 24.2 -0.8 22.9 -1 22.9 -2.7 22.4 -2.8 21.9 -1.2 21.5 -0.8 20.2 -1 20.3 -2.6 19.7 -2.8 18.9 -0.9 17.2 -0.9 16.9 -1.6 16.7 -7.1ZM27.5 -9.3 26.8 -9.4 26.2 -9 26.1 -8.4 26.5 -7.8 26.1 -7.6 26.2 -7.1 27.9 -7.6 27.8 -8.1 27.1 -7.9 26.6 -8.4 26.8 -8.9 27.4 -8.9Z" fill="#333"/></g>
<path transform="translate(959.73 60.00) scale(0.873 1)" d="M17.3 -3.8 16.9 -4.5 16.2 -5 15.4 -4.9 14.6 -4.2 14.2 -3.2 14.4 -2.2 15.1 -1.7 16.6 -1.6 15.7 -0.9 12.3 -0.9 12.6 -1.9 12.3 -3 11.6 -3.6 10.6 -3.8 8.8 -2.9 6.9 -0.9 6.2 -1.5 5.8 -2.8 5.1 -2.6 5.5 0 5.2 0.7 4.4 1.3 2.8 1.5 1.7 1.1 1.1 0.2 1.4 -1.5 0.8 -1.8 0.3 -0.5 0.4 0.6 0.7 1.2 1.7 2 3.8 2.2 4.8 2 5.6 1.4 6.4 -0.4 8.1 0.1 10.2 0 11.5 -0.4 13.2 0 16 -0.2 16.7 -0.6 17.3 -1.5ZM11.8 -2.3 11.8 -1.6 10.9 -0.9 9.8 -0.7 7.7 -0.8 8.8 -2.1 10.1 -2.9 11.2 -2.9ZM15.5 -4.2 16 -4.2 16.4 -3.9 16.8 -2.9 16.6 -2.4 15.5 -2.4 15 -2.8 15.1 -3.6ZM16.2 -7 15.9 -6.4 16.6 -6.1 16.9 -6.7ZM14.8 -6.9 14.6 -6.3 15.2 -6.1 15.4 -6.8Z" fill="#444"/>
<path transform="translate(954.85 77.00) scale(1.172 1)" d="M0.1 1.8 0.7 2.9 1.7 3.6 3 3.9 5.1 3.7 5.9 3.3 5.7 2.8 4 3.1 2.5 3 1.6 2.6 0.9 1.8 1.1 -0.1 2.8 -1.8 3.9 -2.2 4.4 -0.8 5.5 -0.1 7.2 -0.1 8.1 -0.7 9.1 0 10.1 -0.1 10.8 -0.6 11.2 -0.1 12.2 0 13.1 -0.3 13.5 -0.9 14.2 -0.1 15.4 0 16.4 -0.2 17 -0.9 17.1 -2.2 16.6 -4 15.9 -3.8 16.4 -1.9 16.4 -1.2 15.9 -0.8 14.3 -0.9 13.8 -1.8 13.6 -3.4 13.1 -3.4 13.1 -1.3 12.6 -0.8 11.2 -1 11.3 -2.7 10.6 -2.8 10.3 -1.2 9.9 -0.8 9.1 -0.8 8.5 -1.1 8.7 -2.6 8 -2.8 7.5 -1.1 7.1 -0.8 6.2 -0.8 5.3 -1 4.6 -2 4.6 -2.4 5.7 -2.6 5.6 -3.3 4.2 -3.4 2.2 -4.1 0.3 -3.9 0.4 -3.2 2.1 -3.4 3.6 -2.9 2.1 -2.1 0.9 -1.1 0.2 0.3ZM15.9 -6 15.8 -5.4 16.4 -5.2 16.6 -5.9ZM2.8 -6.1 2.7 -5.4 3.3 -5.2 3.5 -5.9Z" fill="#444"/>
<path transform="translate(918.46 94.50) scale(1.082 1)" d="M10.6 0.9 10.1 1.6 10.8 1.9 11.1 1.3ZM9.2 0.9 8.8 1.6 9.4 1.9 9.7 1.3ZM35.2 1.8 35.8 2.9 36.8 3.6 38.1 3.9 40.1 3.7 41 3.3 40.8 2.8 39.1 3.1 37.6 3 36.6 2.6 36 1.8 36.2 -0.1 37.8 -1.8 39 -2.2 39.4 -0.8 40.6 -0.1 42.3 -0.1 43.1 -0.7 44.1 0 45.1 -0.1 45.8 -0.6 46.3 -0.1 47.3 0 48.2 -0.3 48.6 -0.9 49.3 -0.1 50.4 0 51.4 -0.2 52.1 -0.9 52.2 -2.2 51.7 -4 50.9 -3.8 51.5 -1.9 51.4 -1.2 50.9 -0.8 49.4 -0.9 48.9 -1.8 48.7 -3.4 48.1 -3.4 48.1 -1.3 47.6 -0.8 46.3 -1 46.4 -2.7 45.7 -2.8 45.4 -1.2 44.9 -0.8 44.2 -0.8 43.6 -1.1 43.8 -2.6 43.1 -2.8 42.6 -1.1 42.2 -0.8 41.3 -0.8 40.4 -1 39.7 -2 39.7 -2.4 40.8 -2.6 40.7 -3.3 39.3 -3.4 37.3 -4.1 35.4 -3.9 35.5 -3.2 37.1 -3.4 38.7 -2.9 37.1 -2.1 35.9 -1.1 35.2 0.3ZM26.1 -4.8 25.9 -4.2 26.6 -3.9 26.8 -4.5ZM24.7 -4.8 24.6 -4.1 25.2 -3.9 25.4 -4.6ZM21.6 -4.8 21.4 -4.1 22.1 -3.9 22.2 -4.6ZM6.1 -5.3 5.9 -4.8 6.6 -4.4 6.8 -5ZM4.7 -5.2 4.6 -4.6 5.2 -4.4 5.4 -5.1ZM51 -6 50.9 -5.4 51.5 -5.2 51.7 -5.9ZM37.9 -6.1 37.8 -5.4 38.4 -5.2 38.6 -5.9ZM30.8 -7.1 31 -0.1 31.8 -0.1 31.6 -7.1ZM29.2 -7.1 28.5 -7.1 28.7 -1.4 28.2 -0.8 26.2 -0.9 26 -1.3 26.2 -2.7 25.7 -2.8 24.8 -0.9 22.7 -0.9 22.4 -1.3 22.6 -2.7 21.9 -2.8 21.4 -1.1 21 -0.8 19.9 -0.8 19.2 -1.4 18.9 -3.4 18.4 -3.4 18.4 -1.3 17.6 -0.8 16.6 -1 16.6 -2.7 16.1 -2.8 15.6 -1.1 14.9 -0.8 13.8 -1.1 14 -2.6 13.4 -2.8 12.6 -0.9 10.7 -0.9 10.3 -1.3 10.6 -2.7 10 -2.8 9.1 -0.9 7.3 -0.8 6.8 -2.7 6.1 -3.2 5.4 -3.3 4.4 -2.6 4 -1 4.8 -0.1 6.4 0.1 5.6 1.3 4.1 1.9 1.9 1.6 1.1 0.6 1.5 -1.3 0.9 -1.6 0.4 -0.4 0.4 1.1 1.2 2.2 3.2 2.7 5.1 2.4 6.1 1.9 6.8 1.2 7.2 0 9.1 -0.1 9.9 -0.6 10.2 -0.2 11.2 0 12.6 -0.1 13.4 -0.7 14.4 0 15.4 -0.1 16.1 -0.6 16.6 -0.1 17.6 0 18.4 -0.3 18.8 -0.9 19.2 -0.3 20.1 0 21.5 -0.2 22 -0.7 22.4 -0.2 23.2 0 24.8 -0.1 25.6 -0.6 26.4 -0.1 28.3 -0.1 29.1 -0.5 29.4 -1.4ZM5.2 -2.4 5.7 -2.6 6.2 -2.2 6.4 -0.8 5.2 -0.8 4.8 -1.2Z" fill="#444"/>
<path transform="translate(962.72 111.00) scale(0.887 1)" d="M8.3 -5.4 8 -4.9 8.6 -4.6 8.9 -5.1ZM13.3 -6.7 13 -6.1 13.6 -5.8 13.9 -6.4ZM27.6 -6.8 27.8 -0.1 28.4 -0.1 28.2 -6.8ZM16.3 -6.8 16.5 -1.2 16.9 -0.3 17.9 0 19.4 -0.1 22.3 -1.2 22.9 -0.3 23.6 -0.1 25.2 -0.1 26 -0.5 26.2 -1.1 26.1 -6.8 25.4 -6.8 25.6 -1.2 25.1 -0.8 23.4 -0.9 23 -1.4 23.5 -1.6 23.4 -2.2 20.6 -3.3 19.1 -3.2 19.1 -2.6 20.8 -2.6 22 -1.9 19.9 -0.9 17.6 -0.8 17.2 -1.9 17.1 -6.6ZM0.3 -2.5 0.3 -1.8 0.8 -1.2 1.8 -0.9 2.9 -1 3.4 -0.3 4.3 0 7.8 -0.1 9.3 -0.4 11.1 0 13.2 -0.1 14.4 -0.6 15.1 -2 14.9 -3.9 13.9 -4.8 12.9 -4.6 12.4 -3.9 12.1 -2.9 12.5 -1.8 14.3 -1.6 13.6 -0.9 10.2 -0.9 10.5 -2.5 10 -3.2 9.2 -3.5 7.8 -3.2 6.2 -2.1 6 -6.8 5.3 -6.8 5.5 -1.2 5.2 -0.8 4 -0.8 3.6 -1.4 3.4 -4.9 2.7 -4.9 2.7 -4.2 1 -3.5ZM9.9 -2.1 9.8 -1.4 9.1 -1 6.1 -0.8 7.2 -2.1 8.2 -2.7 9.2 -2.8ZM2.7 -3.4 2.8 -1.6 1.8 -1.6 1 -2.1 1 -2.5 1.5 -3.1ZM13.3 -4 13.8 -4 14.2 -3.6 14.4 -2.3 13.2 -2.2 12.9 -2.5 12.8 -3.3ZM2.8 -6.9 2.5 -6.3 3.1 -6.1 3.4 -6.6ZM1.5 -6.9 1.2 -6.4 1.8 -6.1 2.1 -6.6Z" fill="#777"/>
<path transform="translate(996.72 84.90) scale(0.904 1)" d="M6.6 -5.6 6.2 -5.1 6.8 -4.6 7.2 -5.2ZM5.2 -5.6 4.8 -5.1 5.4 -4.6 5.8 -5.2ZM20.2 -7.5 19.5 -7.5 19.7 -1.5 19.2 -0.9 17.2 -1 17.4 -2.8 16.8 -3.6 15.9 -3.9 14.9 -3.8 13.8 -3.2 11.4 -0.8 10.6 -1.3 10.8 -2.7 10.2 -2.9 9.2 -0.9 7.7 -0.8 7.1 -2.9 5.9 -3.5 4.7 -2.8 4.2 -1.1 4.4 -0.6 5.1 -0.1 6.8 0.1 6.1 1.2 5.2 1.8 3.8 2 1.9 1.6 1.3 1 1.1 0.2 1.6 -1.3 0.9 -1.7 0.3 0 0.4 1.2 1.7 2.5 3.8 2.8 5.3 2.6 6.3 2.1 7.1 1.2 7.6 0 9.2 -0.1 10.2 -0.8 10.8 -0.2 12.4 0.1 14.9 0.1 16.4 -0.4 18.1 0 19.7 -0.2 20.3 -0.8 20.5 -1.9ZM5.6 -2.6 6 -2.7 6.5 -2.3 6.8 -0.8 5.7 -0.8 5.1 -1.1 5 -1.8ZM16.7 -2.3 16.5 -1.4 15.8 -0.9 14.7 -0.7 12.4 -0.8 13.7 -2.2 14.9 -3 16.1 -3Z" fill="#333"/>
<path transform="translate(965.00 538.00) scale(0.937 1)" d="M19.1 -2.1 18.4 -3.2 17.3 -3.4 16.4 -2.7 15.3 -0.8 14.4 -0.8 13.8 -1.2 13.4 -2.7 12.7 -2.5 13.1 -0.8 13 0.4 12.2 1.2 11.2 1.4 9.8 1.2 9.1 0.7 8.9 -0.4 9.2 -1.4 8.6 -1.7 8.2 0.5 8.5 1.2 9.5 1.9 11.9 2.1 13.2 1.3 13.9 -0.2 15.1 0 16.1 -0.6 17.5 -0.1 18.5 -0.2 19.1 -0.8ZM17.4 -2.7 18 -2.6 18.5 -1.9 18.5 -1.1 18.1 -0.8 17.3 -0.8 16.4 -1.2ZM10.9 -4.7 10.6 -4.1 11.1 -3.8 11.4 -4.4ZM43.1 -5.9 42.8 -5.3 43.3 -5 43.6 -5.6ZM26.8 -6.4 26.3 -6.4 26.1 -5.6 25.5 -5.2 24.1 -5.4 23.8 -6.4 23.1 -6.2 23.9 0 24.6 -0.1 24.2 -4.6 26.1 -4.8 26.8 -5.5ZM3.1 -6.4 1.7 -5.8 0.8 -4.4 0.9 -3.6 1.8 -3.1 0.9 -2.2 0.8 -1 1.4 -0.3 2.5 0 4.6 -0.4 4.4 -1 2.5 -0.7 1.5 -1.2 1.7 -2.1 3.1 -3.2 3.1 -3.8 2.1 -3.8 1.5 -4.1 1.6 -4.8 2.1 -5.2 3.3 -5.8ZM57.8 -6.8 57.9 -0.1 58.6 -0.1 58.4 -6.8ZM56.2 -6.8 55.5 -6.8 55.7 -1.2 55.2 -0.8 53.4 -0.9 53.6 -2.6 53 -3.2 52.4 -3.5 50.5 -3.1 48.2 -0.8 47.6 -1.1 47.6 -2.4 47.1 -2.6 46.7 -1.4 46.2 -0.8 44.2 -0.8 44.8 -1.7 44.8 -2.5 44.4 -3.4 43.6 -3.9 42.5 -3.8 41.8 -3 41.6 -2 42.1 -0.8 40.1 -0.8 39.4 -1.4 39.9 -1.6 39.9 -2.2 37 -3.3 35.5 -3.2 35.5 -2.6 37.2 -2.6 38.4 -1.9 36.3 -0.9 34.4 -0.8 33.8 -1.4 33.6 -4.9 32.9 -4.9 32.8 -4.2 31.2 -3.5 30.6 -2.7 30.5 -1.8 31.2 -1.1 33.1 -1 33.6 -0.3 34.5 0 36.7 -0.2 38.8 -1.2 39.4 -0.3 40.4 0 43.1 -0.3 45.9 0 47.1 -0.7 47.6 -0.2 49.4 0.1 51.3 0.1 52.8 -0.4 53.8 -0.1 55.3 -0.1 56 -0.4 56.4 -1.1ZM52.9 -2.2 52.8 -1.3 52.1 -0.8 49.1 -0.7 50.1 -1.9 51.3 -2.7 52.3 -2.8ZM43.2 -3.2 43.9 -2.8 44.1 -1.9 43.1 -1.1 42.6 -1.5 42.4 -2.4ZM32.9 -3.4 32.9 -1.6 31.9 -1.6 31.2 -2.1 31.2 -2.5 31.7 -3.1ZM33 -6.9 32.8 -6.3 33.3 -6.1 33.6 -6.6ZM31.8 -6.9 31.4 -6.4 32 -6.1 32.3 -6.6Z" fill="#555"/>
<path transform="translate(915.41 538.00) scale(0.933 1)" d="M8.9 -2.4 8.3 -3.8 7.8 -3.6 8.2 -2.2 8.2 -1.5 7.8 -1.1 6.1 -0.6 2.6 -0.6 1.2 -1.2 1.2 -3.1 0.6 -3.2 0.3 -1.3 0.9 -0.4 1.9 0 6.1 0.1 8.4 -0.7 8.9 -1.4ZM5.1 -4.8 4.8 -4.1 5.4 -3.9 5.7 -4.4ZM3.8 -4.8 3.5 -4.2 4.1 -3.9 4.4 -4.4ZM29.2 -4.9 28.1 -3.8 27.8 -1.8 28.4 -0.3 29.9 0 31.1 -0.6 31.5 -2.8 31 -4.1 30.5 -4.6ZM29.5 -4.2 30.4 -3.7 30.8 -2.5 30.7 -1.3 30.1 -0.8 28.9 -0.9 28.4 -1.8 28.6 -3.3ZM39.8 -6.4 38.8 -5.3 38.8 -3.9 39.6 -3.2 41.2 -3.2 41.7 0 42.4 -0.1 41.6 -5.6 40.8 -6.4ZM39.8 -5.6 40.4 -5.8 40.8 -5.5 41.1 -3.9 40 -3.8 39.4 -4.2 39.3 -4.9ZM34.3 -6.4 33.3 -5.3 33.3 -3.9 34.2 -3.2 35.8 -3.2 36.2 0 36.9 -0.1 36.1 -5.6 35.4 -6.4ZM34.3 -5.6 34.9 -5.8 35.3 -5.5 35.7 -3.9 34.6 -3.8 34 -4.2 33.9 -4.9ZM10.1 -6.8 10.3 -1.2 10.6 -0.5 11.1 -0.1 12.8 -0.1 13.7 -0.9 15.2 0.1 15.9 0.1 16.5 -0.5 17.1 -0.1 18.4 -0.1 19.3 -0.6 20 -0.1 21.9 0 23.1 -0.2 23.8 -0.9 23.6 -2.3 21.6 -4.5 24.4 -6 24.2 -6.7 21.5 -5.3 20.8 -4.4 23 -2.1 23.2 -1.3 22.8 -0.9 20.2 -0.8 19.7 -1.2 19.4 -6.8 18.7 -6.8 18.8 -1.2 18.5 -0.8 17.2 -0.8 15.9 -3.1 14.9 -3.4 13.8 -2.6 12.6 -0.8 11.7 -0.8 11.1 -1.3 10.9 -6.6ZM14.9 -2.8 15.6 -2.4 16 -1.4 15.7 -0.6 14.9 -0.7 14 -1.6Z" fill="#555"/>
<path transform="translate(784.84 538.00) scale(0.966 1)" d="M82.2 0.9 82 1.5 82.5 1.8 82.9 1.2ZM80.9 0.9 80.8 1.6 81.4 1.8 81.5 1.1ZM75.3 0.9 75.1 1.5 75.6 1.8 75.9 1.2ZM74 0.9 73.8 1.6 74.4 1.8 74.6 1.1ZM47.8 0.9 47.6 1.5 48.1 1.8 48.4 1.2ZM46.5 0.9 46.3 1.6 46.9 1.8 47.1 1.1ZM88.8 0.9 88.6 1.6 89.2 1.6 89.4 1.1ZM97.2 0.7 96.6 0.6 95.9 1 95.8 1.6 96.2 2.2 95.8 2.4 95.9 2.8 97.6 2.3 97.4 1.9 96.8 2.1 96.2 1.5 96.6 1.1 97.1 1.1ZM42.9 -2.4 42.4 -3.8 41.8 -3.6 42.2 -2.2 42.2 -1.5 41.9 -1.1 40.1 -0.6 36.6 -0.6 35.2 -1.2 35.2 -3.1 34.6 -3.2 34.4 -1.3 34.9 -0.4 36 0 40.2 0.1 42.5 -0.7 42.9 -1.4ZM4.6 -4.4 4.1 -3.9 4.4 -3.7 3.3 -2.2 3.2 -1.1 3.8 -0.3 5.1 -0.1 6.1 -0.6 6.4 -2 5.8 -3.2ZM4.8 -3.3 5.6 -2.5 5.8 -1.4 5.3 -0.9 4.8 -0.8 3.9 -1.2 3.9 -1.9ZM20.1 -4.6 19.9 -4 20.4 -3.8 20.8 -4.3ZM18.9 -4.6 18.6 -4.1 19.1 -3.8 19.4 -4.3ZM39.1 -4.8 38.9 -4.1 39.4 -3.9 39.8 -4.4ZM37.9 -4.8 37.6 -4.2 38.1 -3.9 38.4 -4.4ZM69.5 -2.7 69.4 -1.8 69.9 -1.2 70.9 -0.9 72 -1 73.1 -0.1 75.1 -0.2 75.7 -0.6 75.9 -1.2 75.9 -2.6 75.4 -3.8 74.8 -3.6 75.2 -2.1 75.2 -1.1 74.7 -0.8 73.3 -0.8 72.8 -1.1 72.5 -4.9 71.8 -4.9 71.8 -4.2 70.5 -3.8ZM71.8 -3.4 71.9 -1.6 70.9 -1.6 70.1 -2.1 70.1 -2.5 70.6 -3.1ZM77.7 -5.2 77.4 -4.7 77.9 -4.4 78.2 -4.9ZM93.6 -5.8 93.2 -5.2 93.8 -4.9 94.1 -5.4ZM5.2 -6.2 5 -5.6 5.6 -5.4 5.9 -5.9ZM4 -6.2 3.7 -5.7 4.2 -5.4 4.6 -5.9ZM99.4 -6.8 98.6 -6.7 98.8 -4.9 98.4 -3.5 95.9 -5.5 95.4 -4.9 98.2 -2.8 96.1 -0.8 96.1 -0.1 98.8 -0.1 99.5 -0.4 99.9 -0.9 99.8 -1.9 99.1 -2.9 99.5 -4.6ZM99.1 -1.8 99.2 -1.2 99 -0.9 97.2 -0.8 98.7 -2.3ZM53.4 -6.8 52.6 -6.7 52.8 -4.9 52.4 -3.5 49.9 -5.5 49.4 -4.9 52.2 -2.8 50.1 -0.8 50.1 -0.1 52.8 -0.1 53.5 -0.4 53.9 -0.9 53.8 -1.9 53.1 -2.9 53.5 -4.6ZM53.1 -1.8 53.2 -1.2 53 -0.9 51.2 -0.8 52.7 -2.3ZM101.3 -6.8 101.5 -0.1 102.2 -0.1 102 -6.8ZM94.3 -3.1 94.1 -3.8 93.3 -3.6 93.8 -2.1 93.8 -1.2 93.2 -0.8 91.9 -0.8 91.1 -1.4 91.6 -1.6 91.5 -2.2 88.6 -3.3 87.1 -3.2 87.1 -2.6 88.8 -2.6 90.1 -1.9 88.2 -0.9 86.2 -0.8 85.6 -1.2 85.4 -1.8 85.3 -6.8 84.6 -6.8 84.8 -1.2 84.4 -0.8 82.4 -0.9 82.2 -1.3 82.4 -2.6 81.8 -2.7 81.1 -0.9 79.6 -0.8 78.4 -3.2 77.8 -2.9 78.4 -1.5 78.4 -0.4 77.4 0.8 76.1 1.5 76.3 2.1 77.5 1.6 78.5 0.8 79.1 -0.4 80.5 0 81.4 -0.2 81.9 -0.6 82.4 -0.1 83.9 0 85.2 -0.6 85.9 -0.1 86.9 0 88.5 -0.3 90.4 -1.2 90.8 -0.6 91.4 -0.1 93.2 -0.1 94.4 -0.8ZM64.1 -6.8 65 -5.2 65.4 -3.2 65.2 -0.7 64.1 1.4 64.9 1.4 66 -0.8 66.2 -3.6 65.3 -6.2 64.8 -6.8ZM62.2 -6.8 62.4 -0.1 63.1 -0.1 62.9 -6.8ZM60.7 -6.8 60 -6.8 60.1 -1.1 59.7 -0.8 58.4 -0.8 57.8 -2.8 57.1 -3.2 56.2 -3.1 55.4 -2.1 55.3 -0.7 56 -0.1 57.4 0.1 56.6 1 55.1 1.4 55.2 2.1 57.3 1.4 58.2 0 59.8 -0.1 60.6 -0.5 60.9 -1.1ZM56.4 -2.4 56.8 -2.5 57.4 -2.1 57.6 -0.8 56.6 -0.8 55.9 -1.1ZM44.2 -6.8 44.4 -1.2 44.6 -0.5 45.8 0 47.9 -0.4 48.4 -1.2 48 -3.8 47.2 -3.6 47.8 -1.8 47.5 -0.9 45.8 -0.8 45.2 -1.1 44.9 -6.6ZM30 -6.8 30.2 -0.1 30.9 -0.1 30.7 -6.8ZM28.4 -6.8 27.8 -6.8 27.9 -1.2 27.4 -0.8 26.4 -0.8 25.1 -3.1 24.5 -3.4 23.5 -3.2 21.7 -0.8 20.6 -0.8 20 -1.1 19.9 -2.6 19.4 -2.6 19.2 -1.3 18.8 -0.9 17.2 -0.8 16.4 -1.4 16.9 -1.6 16.8 -2.2 13.9 -3.3 12.4 -3.2 12.4 -2.6 14.1 -2.6 15.4 -1.9 13.5 -0.9 11.5 -0.8 10.9 -1.2 9.4 -4.4 8.8 -4 9.9 -2.1 9.9 -1.2 9.2 -0.8 7.4 -1.1 7.1 -0.4 9.1 0 10.4 -0.7 11.1 -0.1 12.2 0 13.8 -0.3 15.8 -1.2 16.3 -0.3 17.4 0 18.8 -0.1 19.6 -0.6 20.1 -0.1 21.6 0 22.2 -0.2 22.8 -0.9 24.4 0.1 25.1 0.1 25.7 -0.5 26.6 0 27.8 -0.1 28.4 -0.5 28.6 -1.1ZM24.1 -2.8 24.8 -2.4 25.2 -1.4 24.9 -0.6 24.1 -0.7 23.2 -1.6ZM1.8 -6.8 0.7 -4.9 0.4 -2.1 0.7 -0.4 1.8 1.4 2.5 1.4 1.6 -0.1 1.2 -1.8 1.4 -4.5 2.4 -6.7ZM71.9 -6.9 71.7 -6.3 72.2 -6.1 72.6 -6.6ZM70.7 -6.9 70.4 -6.4 70.9 -6.1 71.2 -6.6Z" fill="#555"/>
<path transform="translate(48.35 555.90) scale(1.350 1)" d="M2.8 -3.6 1.6 -3.4 0.7 -2.3 1.2 -2 1.8 -2.7 2.6 -2.9 3.2 -2.4 3.5 -1.8 3.4 -1.2 1.5 -1.2 0.4 -0.5 0.2 1.1 0.7 3.7 1.4 3.5 0.9 1.4 1.1 -0.2 2.1 -0.6 3.9 -0.4 4.1 -0.8 4 -2.5 3.4 -3.4Z" fill="#fff"/>
<path transform="translate(55.84 555.90) scale(0.959 1)" d="M11.9 -1.1 11.6 -0.3 12.3 0.1 12.6 -0.2 12.6 -0.9ZM2.6 -3.5 1.9 -2.9 2.8 -2.1 3.4 -2.7ZM7.8 -4.9 6.6 -3.8 6.2 -1.8 6.9 -0.3 8.4 0 9.6 -0.6 10 -2.8 9.5 -4.1 9 -4.6ZM8 -4.2 8.9 -3.7 9.3 -2.5 9.2 -1.3 8.6 -0.8 7.4 -0.9 6.9 -1.8 7.1 -3.3ZM12.1 -5.2 11.6 -5 11.6 -4.4 12.3 -4 12.7 -4.8ZM19.7 -6.4 19.6 -5.8 22.2 -5.4 22.8 -0.1 23.6 -0.1 22.9 -6.3 21 -6.2ZM18.2 -6.4 17.6 -6.2 17.8 -5.2 17.3 -4.8 16.6 -5.1 16.6 -6.2 16.2 -6.2 15.9 -5.1 15.2 -4.8 14.8 -5.1 14.5 -6.4 13.8 -6.3 14.6 0 15.3 -0.1 14.9 -4.2 15.8 -4.1 16.3 -4.5 16.8 -4.2 18.1 -4.4 18.5 -5.2Z" fill="#fff"/>
<path transform="translate(45.01 570.70) scale(0.922 1)" d="M31.4 -3.5 30.8 -2.9 31.6 -2.1 32.2 -2.7ZM16.9 -3.5 16.3 -2.9 17.2 -2.1 17.8 -2.7ZM37.3 -6.4 35.9 -5.8 35 -4.4 35.2 -3.6 36 -3.1 35.2 -2.2 35.1 -1 35.6 -0.3 36.8 0 38.9 -0.4 38.7 -1 36.8 -0.7 35.8 -1.2 35.9 -2.1 37.4 -3.2 37.3 -3.8 36.4 -3.8 35.8 -4.1 35.9 -4.8 36.4 -5.2 37.6 -5.8ZM9.9 -6.4 9.4 -6.4 9.2 -5.6 8.6 -5.2 7.2 -5.4 6.9 -6.4 6.2 -6.2 7.1 0 7.8 -0.1 7.4 -4.6 9.2 -4.8 9.9 -5.5ZM3.1 -6.4 1.7 -5.8 0.8 -4.4 0.9 -3.6 1.8 -3.1 0.9 -2.2 0.8 -1 1.4 -0.3 2.5 0 4.6 -0.4 4.4 -1 2.5 -0.7 1.5 -1.2 1.7 -2.1 3.1 -3.2 3.1 -3.8 2.1 -3.8 1.5 -4.1 1.6 -4.8 2.1 -5.2 3.3 -5.8ZM20.6 -6.6 20 -6.2 22.1 -0.1 22.6 -0.1 25 -6.2 24.3 -6.5 22.5 -1.6ZM28.6 -6.8 27.9 -6.8 25.4 -0.1 26.2 -0.2ZM14.2 -6.8 13.5 -6.8 11 -0.1 11.8 -0.2Z" fill="#fff"/>
<path transform="translate(876.62 565.20) scale(1.000 1)" d="M57.8 1.3 57.3 2.1 58.1 2.4 58.4 1.8ZM22.6 1.1 22.2 1.9 22.9 2.2 23.3 1.6ZM68.4 -5.8 68.1 -5.1 68.3 -4.8 68.9 -4.7 69.2 -5.4 68.8 -5.8ZM66.9 -5.8 66.5 -5.5 66.4 -5.1 67.2 -4.7 67.6 -5.4ZM40 -5.8 39.6 -5.5 39.5 -5.1 40.2 -4.7 40.6 -5.4ZM6.4 -5.9 6.1 -5.3 6.3 -4.9 6.9 -4.9 7.2 -5.6 6.8 -6ZM4.8 -5.9 4.5 -5.1 5.2 -4.9 5.6 -5.6 5.1 -6ZM5.8 -7.3 5.2 -6.6 5.5 -6.2 6 -6.2 6.4 -6.9ZM74.9 -7.7 74.4 -8.4 71.3 -6.8 70.3 -5.8 70.3 -5.2 73.1 -2.4 73.2 -1.6 72.6 -1.1 68.6 -1.1 68.2 -1.4 68.4 -3.2 67.6 -3.4 67.1 -1.6 66.5 -1 64.2 -1.1 63.8 -1.6 64 -2.4 63.2 -2.8 62.1 -1.8 60.2 -1.1 58.4 -0.8 55.4 -0.8 53.9 -1.5 53.6 -2 53.8 -3.9 53.1 -4.1 52.7 -2.8 52.8 -1.5 53.7 -0.4 56 0.2 59.9 -0.1 61.9 -0.7 62.9 -1.3 63.5 -0.4 64.8 0 66.8 -0.1 67.7 -0.8 68.1 -0.2 69.1 0 72.8 -0.2 73.9 -1 74.1 -2.2 73.1 -3.9 71.2 -5.6ZM75.8 -8.6 76 -0.1 76.9 -0.1 76.6 -8.6ZM35.6 -8.6 35.8 -1.5 36 -0.8 36.6 -0.2 39.2 -0.1 40.2 -0.8 40.8 -0.2 41.7 0 43.4 -0.1 44.9 -0.5 46.9 0.1 47.7 -0.1 48.4 -0.7 48.6 -1.5 48.2 -2.8 44.6 -6 44.1 -5.3 44.6 -4.9 43.7 -4.2 43.2 -3.2 43.9 -1.1 41.1 -1.1 40.7 -1.6 40.9 -3.2 40.2 -3.4 39.3 -1.1 37.2 -1.1 36.7 -2.3 36.5 -8.6ZM46.8 -3 47.5 -2.1 47.7 -1.3 47.2 -0.9 45.9 -1 46.6 -1.9ZM45.3 -4.1 45.8 -3.7 45.9 -2.9 45.6 -2.1 44.9 -1.5 44.2 -2.4 44.1 -3.3 44.6 -3.9ZM30.6 -8.4 29.7 -8.6 29.9 -1.9 29.8 -1.3 29.2 -0.9 28 -1 27.3 -1.7 27 -8.6 26.1 -8.6 26.3 -1.9 25.8 -1 24.2 -0.9 23.5 -1.2 23.2 -1.6 23.5 -3.2 22.8 -3.4 21.9 -1.1 19.9 -1 18.9 -1.8 19.6 -1.9 19.6 -2.8 18.5 -2.9 16.7 -3.9 15.2 -4.2 13.9 -4.1 14 -3.2 15.9 -3.2 17.8 -2.4 14.8 -1.1 12 -1.1 11.5 -1.6 11.7 -2.4 10.9 -2.8 9.8 -1.8 7.7 -1 6.1 -0.8 2.8 -0.9 1.4 -1.7 1.5 -3.9 0.8 -4.1 0.4 -1.8 0.6 -1.1 1.4 -0.4 3.7 0.2 7.6 -0.1 9.6 -0.7 10.6 -1.3 10.8 -0.8 11.4 -0.2 14.4 -0.1 16.2 -0.6 18.1 -1.6 18.9 -0.4 20.1 0 21.8 -0.1 22.8 -0.8 23.3 -0.2 24.2 0 26.1 -0.1 26.9 -0.8 27.8 -0.1 29.4 -0.1 30.4 -0.5 30.8 -1.5Z" fill="#222"/>
</svg>
<!-- brightness overlay -->
<div class="a" style="left:932px;top:48px;width:52px;height:112px;background:#181818;opacity:0.97"></div>
<div class="a" style="left:953px;top:64px;width:9px;height:27px;background:#767676"></div>
<div class="a" style="left:953px;top:91px;width:9px;height:9px;background:#fff"></div>
<div class="a" style="left:953px;top:100px;width:9px;height:28px;background:#8d88d4"></div>
<svg class="a" style="left:947px;top:130px" width="21" height="21" stroke="#fff" fill="#fff">
  <circle cx="10.3" cy="10.6" r="2.7" stroke="none"/>
  <path d="M14.60 10.60 L16.50 10.60 M13.34 13.64 L14.68 14.98 M10.30 14.90 L10.30 16.80 M7.26 13.64 L5.92 14.98 M6.00 10.60 L4.10 10.60 M7.26 7.56 L5.92 6.22 M10.30 6.30 L10.30 4.40 M13.34 7.56 L14.68 6.22" stroke-width="1.4"/>
</svg>
</body></html>
